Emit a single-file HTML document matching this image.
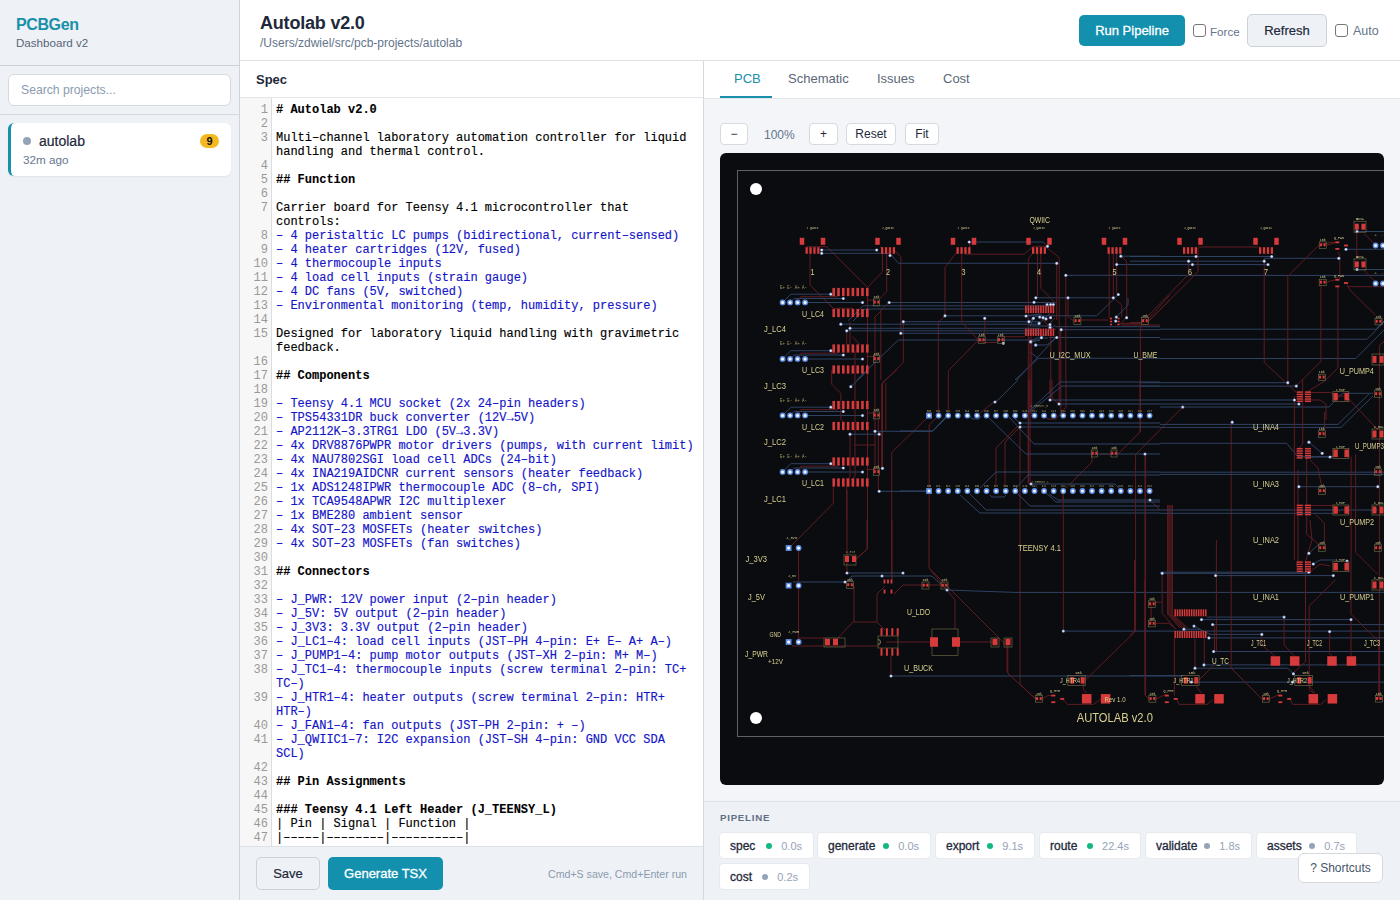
<!DOCTYPE html>
<html><head><meta charset="utf-8">
<style>
*{box-sizing:border-box;margin:0;padding:0}
html,body{width:1400px;height:900px;overflow:hidden;font-family:"Liberation Sans",sans-serif;background:#fff;color:#1e293b}
.sb{position:absolute;left:0;top:0;width:240px;height:900px;background:#eef1f5;border-right:1px solid #cfd4da}
.sbh{position:absolute;left:0;top:0;width:239px;height:66px;border-bottom:1px solid #cdd1d7}
.logo{position:absolute;left:16px;top:16px;font-size:16px;font-weight:bold;color:#1890aa;letter-spacing:-0.4px}
.sub{position:absolute;left:16px;top:36px;font-size:11.6px;color:#56657a}
.search{position:absolute;left:8px;top:74px;width:223px;height:32px;background:#fff;border:1px solid #d6dadf;border-radius:6px}
.search span{position:absolute;left:12px;top:8px;font-size:12.2px;color:#8b9bb0}
.sep{position:absolute;left:0;top:114px;width:239px;height:1px;background:#d5d9de}
.card{position:absolute;left:8px;top:123px;width:223px;height:53px;background:#fff;border-radius:6px;border-left:3px solid #1890aa;box-shadow:0 1px 2px rgba(0,0,0,.06)}
.dot{position:absolute;left:12px;top:14px;width:8px;height:8px;border-radius:50%;background:#94a3b8}
.pname{position:absolute;left:28px;top:10px;font-size:14px;color:#1e293b;-webkit-text-stroke:0.2px #1e293b}
.ago{position:absolute;left:12px;top:30px;font-size:11.7px;color:#66768c}
.badge{position:absolute;left:189px;top:11px;width:19px;height:14px;border-radius:7px;background:#f4b921;font-size:11px;font-weight:bold;text-align:center;line-height:14px;color:#111}

.hdr{position:absolute;left:240px;top:0;width:1160px;height:61px;background:#fff;border-bottom:1px solid #dde1e6}
.title{position:absolute;left:20px;top:13px;font-size:18px;font-weight:bold;color:#1e293b;letter-spacing:-0.2px}
.path{position:absolute;left:20px;top:36px;font-size:12px;color:#64748b}
.btn-run{position:absolute;left:839px;top:15px;width:106px;height:31px;background:#1390ae;border-radius:5px;color:#fff;font-size:13px;text-align:center;line-height:31px;-webkit-text-stroke:0.3px #fff}
.cb{position:absolute;width:13px;height:13px;border:1px solid #767676;border-radius:3px;background:#fff}
.lbl{position:absolute;font-size:12px;color:#64748b}
.btn-ref{position:absolute;left:1007px;top:14px;width:80px;height:33px;background:#eef1f5;border:1px solid #cdd2d8;border-radius:5px;color:#1e293b;font-size:13px;-webkit-text-stroke:0.2px #1e293b;text-align:center;line-height:31px}

.spec{position:absolute;left:240px;top:61px;width:464px;height:839px;background:#fff;border-right:1px solid #d5d8dc}
.spech{position:absolute;left:0;top:0;width:463px;height:37px;border-bottom:1px solid #e2e5e9}
.spech span{position:absolute;left:16px;top:11px;font-size:13px;font-weight:bold;color:#1e293b}
.ed{position:absolute;left:0;top:37px;width:463px;height:748px;overflow:hidden;background:#fff}
.gut{position:absolute;left:0;top:0;width:32px;height:748px;background:#f7f7f7;border-right:1px solid #ddd}
.lines{position:absolute;left:0;top:5px;width:463px;font-family:"Liberation Mono",monospace;font-size:12px;line-height:14px}
.ln{display:flex}
.ln .n{width:28px;text-align:right;color:#999;flex:none}
.ln .t{width:424px;margin-left:8px;white-space:pre-wrap;word-break:normal;color:#000;-webkit-text-stroke:0.15px currentColor}
.ln .t.b{font-weight:bold;-webkit-text-stroke:0.1px currentColor}
.ln .t.l{color:#1414c8}
.specf{position:absolute;left:0;top:785px;width:463px;height:54px;background:#eef1f5;border-top:1px solid #dde1e6}
.btn-save{position:absolute;left:16px;top:10px;width:64px;height:33px;background:#eef1f5;border:1px solid #cdd2d8;border-radius:5px;font-size:13px;-webkit-text-stroke:0.2px #1e293b;color:#1e293b;text-align:center;line-height:31px}
.btn-gen{position:absolute;left:88px;top:10px;width:115px;height:33px;background:#1390ae;border-radius:5px;font-size:13px;-webkit-text-stroke:0.3px #fff;color:#fff;text-align:center;line-height:33px}
.hint{position:absolute;right:16px;top:21px;font-size:10.6px;color:#8b9bb0}

.rp{position:absolute;left:704px;top:61px;width:696px;height:839px;background:#f3f5f8}
.tabs{position:absolute;left:0;top:0;width:696px;height:38px;background:#fff;border-bottom:1px solid #e2e5e9}
.tab{position:absolute;top:10px;font-size:13px;color:#5b6778}
.tab.a{color:#1890aa}
.uline{position:absolute;left:16px;top:35px;width:52px;height:2px;background:#1890aa}
.zb{position:absolute;top:62px;height:22px;background:#fff;border:1px solid #d6dadf;border-radius:4px;font-size:12px;color:#1e293b;text-align:center;line-height:20px}
.pcb{position:absolute;left:16px;top:92px;width:664px;height:632px;background:#0b0c10;border-radius:6px;overflow:hidden}
.pipe{position:absolute;left:0;top:740px;width:696px;height:99px;background:#eef1f5;border-top:1px solid #dde1e6}
.plbl{position:absolute;left:16px;top:9.5px;font-size:9.7px;font-weight:bold;color:#5f6f86;letter-spacing:0.75px}
.chip{position:absolute;height:27px;background:#fff;border-radius:4px;font-size:13px;color:#1e293b;white-space:nowrap;display:flex;align-items:center;padding:0 11px 0 10px;border:1px solid #e6e9ee}
.chip b{font-weight:normal;flex:1;font-size:12px;-webkit-text-stroke:0.3px #1e293b}
.chip i{display:block;width:6px;height:6px;border-radius:50%;margin-right:9px}
.chip s{text-decoration:none;color:#94a3b8;font-size:11px}
.sc{position:absolute;left:594px;top:792px;width:85px;height:30px;background:#fff;border:1px solid #d6dadf;border-radius:6px;font-size:12px;color:#475569;text-align:center;line-height:29px}
</style></head><body>
<div class="sb">
  <div class="sbh"><div class="logo">PCBGen</div><div class="sub">Dashboard v2</div></div>
  <div class="search"><span>Search projects...</span></div>
  <div class="sep"></div>
  <div class="card"><div class="dot"></div><div class="pname">autolab</div><div class="ago">32m ago</div><div class="badge">9</div></div>
</div>
<div class="hdr">
  <div class="title">Autolab v2.0</div>
  <div class="path">/Users/zdwiel/src/pcb-projects/autolab</div>
  <div class="btn-run">Run Pipeline</div>
  <div class="cb" style="left:953px;top:24px"></div><div class="lbl" style="left:970px;top:25px;font-size:11.6px">Force</div>
  <div class="btn-ref">Refresh</div>
  <div class="cb" style="left:1095px;top:24px"></div><div class="lbl" style="left:1113px;top:24px;font-size:12.5px">Auto</div>
</div>
<div class="spec">
  <div class="spech"><span>Spec</span></div>
  <div class="ed"><div class="gut"></div><div class="lines">
<div class="ln"><span class="n">1</span><span class="t b"># Autolab v2.0</span></div>
<div class="ln"><span class="n">2</span><span class="t"></span></div>
<div class="ln"><span class="n">3</span><span class="t">Multi–channel laboratory automation controller for liquid handling and thermal control.</span></div>
<div class="ln"><span class="n">4</span><span class="t"></span></div>
<div class="ln"><span class="n">5</span><span class="t b">## Function</span></div>
<div class="ln"><span class="n">6</span><span class="t"></span></div>
<div class="ln"><span class="n">7</span><span class="t">Carrier board for Teensy 4.1 microcontroller that controls:</span></div>
<div class="ln"><span class="n">8</span><span class="t l">– 4 peristaltic LC pumps (bidirectional, current–sensed)</span></div>
<div class="ln"><span class="n">9</span><span class="t l">– 4 heater cartridges (12V, fused)</span></div>
<div class="ln"><span class="n">10</span><span class="t l">– 4 thermocouple inputs</span></div>
<div class="ln"><span class="n">11</span><span class="t l">– 4 load cell inputs (strain gauge)</span></div>
<div class="ln"><span class="n">12</span><span class="t l">– 4 DC fans (5V, switched)</span></div>
<div class="ln"><span class="n">13</span><span class="t l">– Environmental monitoring (temp, humidity, pressure)</span></div>
<div class="ln"><span class="n">14</span><span class="t"></span></div>
<div class="ln"><span class="n">15</span><span class="t">Designed for laboratory liquid handling with gravimetric feedback.</span></div>
<div class="ln"><span class="n">16</span><span class="t"></span></div>
<div class="ln"><span class="n">17</span><span class="t b">## Components</span></div>
<div class="ln"><span class="n">18</span><span class="t"></span></div>
<div class="ln"><span class="n">19</span><span class="t l">– Teensy 4.1 MCU socket (2x 24–pin headers)</span></div>
<div class="ln"><span class="n">20</span><span class="t l">– TPS54331DR buck converter (12V→5V)</span></div>
<div class="ln"><span class="n">21</span><span class="t l">– AP2112K–3.3TRG1 LDO (5V→3.3V)</span></div>
<div class="ln"><span class="n">22</span><span class="t l">– 4x DRV8876PWPR motor drivers (pumps, with current limit)</span></div>
<div class="ln"><span class="n">23</span><span class="t l">– 4x NAU7802SGI load cell ADCs (24–bit)</span></div>
<div class="ln"><span class="n">24</span><span class="t l">– 4x INA219AIDCNR current sensors (heater feedback)</span></div>
<div class="ln"><span class="n">25</span><span class="t l">– 1x ADS1248IPWR thermocouple ADC (8–ch, SPI)</span></div>
<div class="ln"><span class="n">26</span><span class="t l">– 1x TCA9548APWR I2C multiplexer</span></div>
<div class="ln"><span class="n">27</span><span class="t l">– 1x BME280 ambient sensor</span></div>
<div class="ln"><span class="n">28</span><span class="t l">– 4x SOT–23 MOSFETs (heater switches)</span></div>
<div class="ln"><span class="n">29</span><span class="t l">– 4x SOT–23 MOSFETs (fan switches)</span></div>
<div class="ln"><span class="n">30</span><span class="t"></span></div>
<div class="ln"><span class="n">31</span><span class="t b">## Connectors</span></div>
<div class="ln"><span class="n">32</span><span class="t"></span></div>
<div class="ln"><span class="n">33</span><span class="t l">– J_PWR: 12V power input (2–pin header)</span></div>
<div class="ln"><span class="n">34</span><span class="t l">– J_5V: 5V output (2–pin header)</span></div>
<div class="ln"><span class="n">35</span><span class="t l">– J_3V3: 3.3V output (2–pin header)</span></div>
<div class="ln"><span class="n">36</span><span class="t l">– J_LC1–4: load cell inputs (JST–PH 4–pin: E+ E– A+ A–)</span></div>
<div class="ln"><span class="n">37</span><span class="t l">– J_PUMP1–4: pump motor outputs (JST–XH 2–pin: M+ M–)</span></div>
<div class="ln"><span class="n">38</span><span class="t l">– J_TC1–4: thermocouple inputs (screw terminal 2–pin: TC+ TC–)</span></div>
<div class="ln"><span class="n">39</span><span class="t l">– J_HTR1–4: heater outputs (screw terminal 2–pin: HTR+ HTR–)</span></div>
<div class="ln"><span class="n">40</span><span class="t l">– J_FAN1–4: fan outputs (JST–PH 2–pin: + –)</span></div>
<div class="ln"><span class="n">41</span><span class="t l">– J_QWIIC1–7: I2C expansion (JST–SH 4–pin: GND VCC SDA SCL)</span></div>
<div class="ln"><span class="n">42</span><span class="t"></span></div>
<div class="ln"><span class="n">43</span><span class="t b">## Pin Assignments</span></div>
<div class="ln"><span class="n">44</span><span class="t"></span></div>
<div class="ln"><span class="n">45</span><span class="t b">### Teensy 4.1 Left Header (J_TEENSY_L)</span></div>
<div class="ln"><span class="n">46</span><span class="t">| Pin | Signal | Function |</span></div>
<div class="ln"><span class="n">47</span><span class="t">|–––––|––––––––|––––––––––|</span></div>
<div class="ln"><span class="n">48</span><span class="t">| 1 | GND | Ground |</span></div>
<div class="ln"><span class="n">49</span><span class="t">| 2 | D0 | UART RX |</span></div>
  </div></div>
  <div class="specf"><div class="btn-save">Save</div><div class="btn-gen">Generate TSX</div><div class="hint">Cmd+S save, Cmd+Enter run</div></div>
</div>
<div class="rp">
  <div class="tabs">
    <div class="tab a" style="left:30px">PCB</div>
    <div class="tab" style="left:84px">Schematic</div>
    <div class="tab" style="left:173px">Issues</div>
    <div class="tab" style="left:239px">Cost</div>
    <div class="uline"></div>
  </div>
  <div class="zb" style="left:16px;width:28px">&minus;</div>
  <div style="position:absolute;left:60px;top:67px;font-size:12px;color:#64748b">100%</div>
  <div class="zb" style="left:105px;width:29px">+</div>
  <div class="zb" style="left:142px;width:50px">Reset</div>
  <div class="zb" style="left:201px;width:34px">Fit</div>
  <div class="pcb"><svg width="664" height="632" viewBox="720 153 664 632" style="display:block;will-change:transform;font-family:'Liberation Mono',monospace"><rect x="737.5" y="170.5" width="700" height="566" fill="none" stroke="#606168" stroke-width="1"/>
<polyline points="806.7,246.7 826.7,246.7 867.5,287.5" fill="none" stroke="#5e1c21" stroke-width="1.0"/>
<polyline points="880.0,246.7 882.5,249.0 882.5,271.7 867.5,287.5" fill="none" stroke="#5e1c21" stroke-width="1.0"/>
<polyline points="810.0,248.3 810.0,285.0 833.3,308.3 853.3,308.3" fill="none" stroke="#5e1c21" stroke-width="1.0"/>
<polyline points="867.5,287.5 867.5,549.0 855.0,560.0" fill="none" stroke="#5e1c21" stroke-width="1.0"/>
<polyline points="886.7,253.3 886.7,291.7 880.0,298.3" fill="none" stroke="#5e1c21" stroke-width="1.0"/>
<polyline points="895.0,250.8 900.8,256.7 900.8,333.3" fill="none" stroke="#5e1c21" stroke-width="1.0"/>
<polyline points="903.3,321.7 903.3,362.5 881.7,384.0 881.7,470.0" fill="none" stroke="#5e1c21" stroke-width="1.0"/>
<polyline points="889.0,302.5 880.3,310.5" fill="none" stroke="#5e1c21" stroke-width="1.0"/>
<polyline points="880.0,312.0 875.0,317.0 875.0,375.0" fill="none" stroke="#5e1c21" stroke-width="1.0"/>
<polyline points="880.8,310.0 880.8,380.0" fill="none" stroke="#5e1c21" stroke-width="1.0"/>
<polyline points="958.3,250.0 945.0,267.5 945.0,315.8 938.3,322.5 938.3,414.0" fill="none" stroke="#5e1c21" stroke-width="1.0"/>
<polyline points="782.5,302.5 790.8,294.2 830.8,294.2" fill="none" stroke="#2e4262" stroke-width="1.0"/>
<polyline points="790.0,302.5 794.2,298.5 843.3,298.5" fill="none" stroke="#2e4262" stroke-width="1.0"/>
<polyline points="797.5,302.5 800.8,296.7 838.0,296.7" fill="none" stroke="#5e1c21" stroke-width="1.0"/>
<polyline points="805.0,302.5 862.5,302.5" fill="none" stroke="#2e4262" stroke-width="1.0"/>
<polyline points="866.7,300.0 875.0,300.0" fill="none" stroke="#5e1c21" stroke-width="1.0"/>
<polyline points="782.5,359.0 790.8,350.7 830.8,350.7" fill="none" stroke="#2e4262" stroke-width="1.0"/>
<polyline points="790.0,359.0 794.2,355.0 843.3,355.0" fill="none" stroke="#2e4262" stroke-width="1.0"/>
<polyline points="797.5,359.0 800.8,353.2 838.0,353.2" fill="none" stroke="#5e1c21" stroke-width="1.0"/>
<polyline points="805.0,359.0 862.5,359.0" fill="none" stroke="#2e4262" stroke-width="1.0"/>
<polyline points="866.7,356.5 875.0,356.5" fill="none" stroke="#5e1c21" stroke-width="1.0"/>
<polyline points="782.5,415.5 790.8,407.2 830.8,407.2" fill="none" stroke="#2e4262" stroke-width="1.0"/>
<polyline points="790.0,415.5 794.2,411.5 843.3,411.5" fill="none" stroke="#2e4262" stroke-width="1.0"/>
<polyline points="797.5,415.5 800.8,409.7 838.0,409.7" fill="none" stroke="#5e1c21" stroke-width="1.0"/>
<polyline points="805.0,415.5 862.5,415.5" fill="none" stroke="#2e4262" stroke-width="1.0"/>
<polyline points="866.7,413.0 875.0,413.0" fill="none" stroke="#5e1c21" stroke-width="1.0"/>
<polyline points="782.5,472.0 790.8,463.7 830.8,463.7" fill="none" stroke="#2e4262" stroke-width="1.0"/>
<polyline points="790.0,472.0 794.2,468.0 843.3,468.0" fill="none" stroke="#2e4262" stroke-width="1.0"/>
<polyline points="797.5,472.0 800.8,466.2 838.0,466.2" fill="none" stroke="#5e1c21" stroke-width="1.0"/>
<polyline points="805.0,472.0 862.5,472.0" fill="none" stroke="#2e4262" stroke-width="1.0"/>
<polyline points="866.7,469.5 875.0,469.5" fill="none" stroke="#5e1c21" stroke-width="1.0"/>
<polyline points="831.7,370.0 831.7,384.2 840.8,393.3 840.8,419.2 843.3,422.0" fill="none" stroke="#5e1c21" stroke-width="1.0"/>
<polyline points="850.0,322.0 850.0,345.0" fill="none" stroke="#5e1c21" stroke-width="1.0"/>
<polyline points="846.7,330.0 846.7,345.0" fill="none" stroke="#5e1c21" stroke-width="1.0"/>
<polyline points="852.5,336.7 860.0,345.0" fill="none" stroke="#5e1c21" stroke-width="1.0"/>
<polyline points="850.0,435.0 850.0,476.7 847.0,480.0" fill="none" stroke="#5e1c21" stroke-width="1.0"/>
<polyline points="855.0,350.0 855.0,476.7 851.0,480.0" fill="none" stroke="#5e1c21" stroke-width="1.0"/>
<polyline points="854.2,445.0 875.8,445.0" fill="none" stroke="#5e1c21" stroke-width="1.0"/>
<polyline points="875.0,375.0 875.0,470.0" fill="none" stroke="#5e1c21" stroke-width="1.0"/>
<polyline points="878.3,418.3 878.3,490.0" fill="none" stroke="#5e1c21" stroke-width="1.0"/>
<polyline points="882.5,383.3 882.5,468.3" fill="none" stroke="#5e1c21" stroke-width="1.0"/>
<polyline points="881.7,383.3 896.7,370.0" fill="none" stroke="#5e1c21" stroke-width="1.0"/>
<polyline points="885.8,383.0 885.8,430.0" fill="none" stroke="#5e1c21" stroke-width="1.0"/>
<polyline points="926.7,418.3 891.7,452.5 891.7,580.0" fill="none" stroke="#5e1c21" stroke-width="1.0"/>
<polyline points="936.7,417.5 929.2,425.0 929.2,520.0" fill="none" stroke="#5e1c21" stroke-width="1.0"/>
<polyline points="833.3,486.7 833.3,503.3 790.0,547.0" fill="none" stroke="#5e1c21" stroke-width="1.0"/>
<polyline points="846.7,478.0 846.7,520.0" fill="none" stroke="#5e1c21" stroke-width="1.0"/>
<polyline points="875.0,431.3 932.5,431.3 946.7,415.8" fill="none" stroke="#2e4262" stroke-width="1.0"/>
<polyline points="850.0,434.2 879.2,434.2" fill="none" stroke="#2e4262" stroke-width="1.0"/>
<polyline points="879.2,491.3 929.2,491.3" fill="none" stroke="#2e4262" stroke-width="1.0"/>
<polyline points="850.8,386.7 866.7,371.7" fill="none" stroke="#2e4262" stroke-width="1.0"/>
<polyline points="821.7,250.0 876.7,250.0" fill="none" stroke="#2e4262" stroke-width="1.0"/>
<polyline points="821.7,253.3 890.0,253.3 898.3,263.3 1056.7,263.3" fill="none" stroke="#2e4262" stroke-width="1.0"/>
<polyline points="889.2,302.5 1040.0,302.5" fill="none" stroke="#2e4262" stroke-width="1.0"/>
<polyline points="848.0,320.8 863.3,305.8 1040.0,305.8" fill="none" stroke="#2e4262" stroke-width="1.0"/>
<polyline points="853.0,321.0 865.0,309.0 1040.0,309.0" fill="none" stroke="#2e4262" stroke-width="1.0"/>
<polyline points="903.3,321.7 1040.0,321.7" fill="none" stroke="#2e4262" stroke-width="1.0"/>
<polyline points="840.8,324.2 1040.0,324.2" fill="none" stroke="#2e4262" stroke-width="1.0"/>
<polyline points="850.0,328.3 1040.0,328.3" fill="none" stroke="#2e4262" stroke-width="1.0"/>
<polyline points="846.7,330.8 1040.0,330.8" fill="none" stroke="#2e4262" stroke-width="1.0"/>
<polyline points="900.8,333.3 1040.0,333.3" fill="none" stroke="#2e4262" stroke-width="1.0"/>
<polyline points="945.0,315.8 1040.0,315.8" fill="none" stroke="#2e4262" stroke-width="1.0"/>
<polyline points="898.3,340.0 1040.0,340.0" fill="none" stroke="#2e4262" stroke-width="1.0"/>
<polyline points="898.3,340.0 856.7,380.0" fill="none" stroke="#2e4262" stroke-width="1.0"/>
<polyline points="969.2,242.0 1043.3,242.0 1047.5,246.3" fill="none" stroke="#2e4262" stroke-width="1.0"/>
<polyline points="1065.8,275.3 1160.0,275.3" fill="none" stroke="#2e4262" stroke-width="1.0"/>
<polyline points="1120.8,256.2 1160.0,256.2" fill="none" stroke="#2e4262" stroke-width="1.0"/>
<polyline points="1116.7,264.5 1160.0,264.5" fill="none" stroke="#2e4262" stroke-width="1.0"/>
<polyline points="1035.8,297.8 1113.3,297.8" fill="none" stroke="#2e4262" stroke-width="1.0"/>
<polyline points="1040.0,315.8 1096.7,315.8 1118.3,294.5" fill="none" stroke="#2e4262" stroke-width="1.0"/>
<polyline points="984.7,318.3 984.7,336.7" fill="none" stroke="#5e1c21" stroke-width="1.0"/>
<polyline points="1040.0,340.0 1030.8,342.0" fill="none" stroke="#2e4262" stroke-width="1.0"/>
<polyline points="1035.8,345.0 1046.7,345.0 1056.7,337.5" fill="none" stroke="#2e4262" stroke-width="1.0"/>
<polyline points="1049.0,337.5 1160.0,337.5" fill="none" stroke="#2e4262" stroke-width="1.0"/>
<polyline points="1061.2,329.7 1160.0,329.7" fill="none" stroke="#2e4262" stroke-width="1.0"/>
<polyline points="1055.0,326.7 1160.0,326.7" fill="none" stroke="#2e4262" stroke-width="1.0"/>
<polyline points="1030.0,352.0 1038.3,358.3 1160.0,358.3" fill="none" stroke="#2e4262" stroke-width="1.0"/>
<polyline points="1038.3,358.3 1015.0,380.0" fill="none" stroke="#2e4262" stroke-width="1.0"/>
<polyline points="1056.7,336.7 1016.7,380.0" fill="none" stroke="#2e4262" stroke-width="1.0"/>
<polyline points="1040.0,302.5 1055.0,302.5" fill="none" stroke="#2e4262" stroke-width="1.0"/>
<polyline points="1040.0,305.8 1048.0,305.8" fill="none" stroke="#2e4262" stroke-width="1.0"/>
<polyline points="961.7,250.0 961.7,322.5 978.3,340.0 948.3,370.8 948.3,414.0" fill="none" stroke="#5e1c21" stroke-width="1.0"/>
<polyline points="965.0,254.2 1024.2,254.2 1033.3,246.3" fill="none" stroke="#5e1c21" stroke-width="1.0"/>
<polyline points="969.7,242.0 969.7,250.0" fill="none" stroke="#5e1c21" stroke-width="1.0"/>
<polyline points="1033.3,246.3 1045.0,246.3 1059.2,257.5 1059.2,404.0" fill="none" stroke="#5e1c21" stroke-width="1.0"/>
<polyline points="1032.5,253.3 1028.3,259.2 1028.3,484.0" fill="none" stroke="#5e1c21" stroke-width="1.0"/>
<polyline points="1037.5,253.3 1037.5,296.7" fill="none" stroke="#5e1c21" stroke-width="1.0"/>
<polyline points="1040.8,253.3 1040.8,288.3 1055.8,303.3" fill="none" stroke="#5e1c21" stroke-width="1.0"/>
<polyline points="1056.7,263.3 1056.7,320.0" fill="none" stroke="#5e1c21" stroke-width="1.0"/>
<polyline points="1065.8,275.3 1065.8,380.0" fill="none" stroke="#5e1c21" stroke-width="1.0"/>
<polyline points="1068.0,297.8 1068.0,316.7 1073.3,320.8" fill="none" stroke="#5e1c21" stroke-width="1.0"/>
<polyline points="978.3,340.0 983.0,342.5 996.0,342.5 1000.0,340.0" fill="none" stroke="#5e1c21" stroke-width="1.0"/>
<polyline points="1000.8,336.7 1025.0,336.7" fill="none" stroke="#5e1c21" stroke-width="1.0"/>
<polyline points="1109.2,253.3 1109.2,316.7 1110.8,320.0" fill="none" stroke="#5e1c21" stroke-width="1.0"/>
<polyline points="1113.3,253.3 1113.3,296.7" fill="none" stroke="#5e1c21" stroke-width="1.0"/>
<polyline points="1116.7,253.3 1116.7,293.3" fill="none" stroke="#5e1c21" stroke-width="1.0"/>
<polyline points="1121.7,256.7 1126.7,261.7 1126.7,316.7 1121.7,322.5" fill="none" stroke="#5e1c21" stroke-width="1.0"/>
<polyline points="1113.3,297.5 1121.7,305.0 1121.7,316.7" fill="none" stroke="#5e1c21" stroke-width="1.0"/>
<polyline points="1080.0,320.0 1108.3,320.0" fill="none" stroke="#5e1c21" stroke-width="1.0"/>
<polyline points="1120.8,325.0 1160.0,325.0" fill="none" stroke="#5e1c21" stroke-width="1.0"/>
<polyline points="1050.8,321.7 1050.8,400.0" fill="none" stroke="#5e1c21" stroke-width="1.0"/>
<polyline points="1060.8,330.0 1060.8,414.0" fill="none" stroke="#5e1c21" stroke-width="1.0"/>
<polyline points="1030.0,336.7 1030.0,414.0" fill="none" stroke="#5e1c21" stroke-width="1.0"/>
<polyline points="1031.7,336.7 1031.7,414.0" fill="none" stroke="#5e1c21" stroke-width="1.0"/>
<polyline points="1130.0,256.5 1271.7,256.5" fill="none" stroke="#2e4262" stroke-width="1.0"/>
<polyline points="1264.2,258.3 1338.8,258.3" fill="none" stroke="#2e4262" stroke-width="1.0"/>
<polyline points="1130.0,261.2 1264.2,261.2" fill="none" stroke="#2e4262" stroke-width="1.0"/>
<polyline points="1130.0,264.6 1268.0,264.6" fill="none" stroke="#2e4262" stroke-width="1.0"/>
<polyline points="1346.0,249.3 1384.0,249.3" fill="none" stroke="#2e4262" stroke-width="1.0"/>
<polyline points="1160.0,275.4 1384.0,275.4" fill="none" stroke="#2e4262" stroke-width="1.0"/>
<polyline points="1160.0,329.2 1375.6,329.2 1384.0,321.0" fill="none" stroke="#2e4262" stroke-width="1.0"/>
<polyline points="1160.0,339.2 1367.2,339.2 1384.0,322.0" fill="none" stroke="#2e4262" stroke-width="1.0"/>
<polyline points="1160.0,358.5 1355.8,358.5 1384.0,330.0" fill="none" stroke="#2e4262" stroke-width="1.0"/>
<polyline points="1160.0,337.5 1160.0,337.5" fill="none" stroke="#2e4262" stroke-width="1.0"/>
<polyline points="1140.0,382.7 1287.8,382.7" fill="none" stroke="#2e4262" stroke-width="1.0"/>
<polyline points="1140.0,386.1 1296.3,386.1" fill="none" stroke="#2e4262" stroke-width="1.0"/>
<polyline points="1198.0,247.0 1258.5,247.0" fill="none" stroke="#5e1c21" stroke-width="1.0"/>
<polyline points="1188.6,261.2 1188.6,274.4 1141.3,322.6 1130.0,322.6" fill="none" stroke="#5e1c21" stroke-width="1.0"/>
<polyline points="1198.0,248.0 1198.0,271.6 1147.0,322.6" fill="none" stroke="#5e1c21" stroke-width="1.0"/>
<polyline points="1140.4,325.4 1140.4,432.0" fill="none" stroke="#5e1c21" stroke-width="1.0"/>
<polyline points="1264.2,258.3 1264.2,362.3 1296.3,392.5" fill="none" stroke="#5e1c21" stroke-width="1.0"/>
<polyline points="1287.8,276.3 1319.0,245.1 1330.3,242.3 1337.0,242.3" fill="none" stroke="#5e1c21" stroke-width="1.0"/>
<polyline points="1287.8,276.3 1287.8,382.7" fill="none" stroke="#5e1c21" stroke-width="1.0"/>
<polyline points="1320.9,284.8 1320.9,361.3 1296.3,386.0" fill="none" stroke="#5e1c21" stroke-width="1.0"/>
<polyline points="1326.5,282.0 1335.0,280.0" fill="none" stroke="#5e1c21" stroke-width="1.0"/>
<polyline points="1326.5,245.0 1335.0,243.0" fill="none" stroke="#5e1c21" stroke-width="1.0"/>
<polyline points="1337.9,251.7 1339.8,254.6 1339.8,279.1" fill="none" stroke="#5e1c21" stroke-width="1.0"/>
<polyline points="1337.9,286.7 1337.9,368.0 1324.6,381.2 1300.0,396.3" fill="none" stroke="#5e1c21" stroke-width="1.0"/>
<polyline points="1346.4,284.8 1352.0,292.4 1375.6,315.0" fill="none" stroke="#5e1c21" stroke-width="1.0"/>
<polyline points="1347.3,286.7 1384.0,286.7" fill="none" stroke="#5e1c21" stroke-width="1.0"/>
<polyline points="1356.8,226.0 1356.8,258.3" fill="none" stroke="#5e1c21" stroke-width="1.0"/>
<polyline points="1363.4,269.7 1375.6,282.0" fill="none" stroke="#5e1c21" stroke-width="1.0"/>
<polyline points="1364.3,233.8 1375.6,245.1" fill="none" stroke="#5e1c21" stroke-width="1.0"/>
<polyline points="1384.0,341.5 1379.4,345.3 1379.4,700.0" fill="none" stroke="#5e1c21" stroke-width="1.0"/>
<polyline points="1305.7,392.5 1330.3,392.5 1335.0,396.3" fill="none" stroke="#5e1c21" stroke-width="1.0"/>
<polyline points="938.0,412.0 938.0,416.0" fill="none" stroke="#5e1c21" stroke-width="1.0"/>
<polyline points="948.0,412.0 948.0,416.0" fill="none" stroke="#5e1c21" stroke-width="1.0"/>
<polyline points="980.0,413.0 994.0,402.0" fill="none" stroke="#5e1c21" stroke-width="1.0"/>
<polyline points="1030.0,380.0 1030.0,484.0" fill="none" stroke="#5e1c21" stroke-width="1.0"/>
<polyline points="1028.3,380.0 1028.3,483.0" fill="none" stroke="#5e1c21" stroke-width="1.0"/>
<polyline points="1050.0,380.0 1050.0,400.0" fill="none" stroke="#5e1c21" stroke-width="1.0"/>
<polyline points="1052.0,380.0 1052.0,398.0 1059.0,404.0" fill="none" stroke="#5e1c21" stroke-width="1.0"/>
<polyline points="1066.0,380.0 1066.0,407.0 1056.0,419.0 1048.0,419.0 1044.0,415.0" fill="none" stroke="#5e1c21" stroke-width="1.0"/>
<polyline points="996.0,448.0 1018.0,426.0" fill="none" stroke="#5e1c21" stroke-width="1.0"/>
<polyline points="996.0,448.0 996.0,486.0" fill="none" stroke="#5e1c21" stroke-width="1.0"/>
<polyline points="1005.0,442.0 1020.0,427.0" fill="none" stroke="#5e1c21" stroke-width="1.0"/>
<polyline points="1005.0,442.0 1005.0,487.0" fill="none" stroke="#5e1c21" stroke-width="1.0"/>
<polyline points="1020.0,428.0 1020.0,684.4 1035.6,698.9" fill="none" stroke="#5e1c21" stroke-width="1.0"/>
<polyline points="1063.0,489.0 1063.0,500.0" fill="none" stroke="#5e1c21" stroke-width="1.0"/>
<polyline points="1066.0,488.0 1092.0,462.0 1092.0,454.0" fill="none" stroke="#5e1c21" stroke-width="1.0"/>
<polyline points="1100.0,454.0 1112.0,454.0" fill="none" stroke="#5e1c21" stroke-width="1.0"/>
<polyline points="1118.0,454.0 1140.0,432.0 1140.0,380.0" fill="none" stroke="#5e1c21" stroke-width="1.0"/>
<polyline points="1136.0,454.0 1182.7,407.1" fill="none" stroke="#5e1c21" stroke-width="1.0"/>
<polyline points="1145.0,454.0 1145.0,640.0" fill="none" stroke="#5e1c21" stroke-width="1.0"/>
<polyline points="1150.0,500.0 1160.0,510.0" fill="none" stroke="#5e1c21" stroke-width="1.0"/>
<polyline points="900.0,431.0 933.0,431.0 948.0,416.0" fill="none" stroke="#2e4262" stroke-width="1.0"/>
<polyline points="988.0,417.0 1026.0,454.0 1160.0,454.0" fill="none" stroke="#2e4262" stroke-width="1.0"/>
<polyline points="1009.0,417.0 1034.0,444.0 1160.0,444.0" fill="none" stroke="#2e4262" stroke-width="1.0"/>
<polyline points="1012.0,416.0 1020.0,423.0 1160.0,423.0" fill="none" stroke="#2e4262" stroke-width="1.0"/>
<polyline points="1020.0,427.0 1160.0,427.0" fill="none" stroke="#2e4262" stroke-width="1.0"/>
<polyline points="1018.0,380.0 998.0,400.0 995.0,402.0" fill="none" stroke="#2e4262" stroke-width="1.0"/>
<polyline points="1028.0,412.0 1060.0,382.0 1160.0,382.0" fill="none" stroke="#2e4262" stroke-width="1.0"/>
<polyline points="1030.0,412.0 1062.0,386.0 1160.0,386.0" fill="none" stroke="#2e4262" stroke-width="1.0"/>
<polyline points="1050.0,400.0 1160.0,400.0" fill="none" stroke="#2e4262" stroke-width="1.0"/>
<polyline points="1059.0,404.0 1160.0,404.0" fill="none" stroke="#2e4262" stroke-width="1.0"/>
<polyline points="900.0,491.0 928.0,491.0" fill="none" stroke="#2e4262" stroke-width="1.0"/>
<polyline points="980.0,488.0 996.0,472.0 1160.0,472.0" fill="none" stroke="#2e4262" stroke-width="1.0"/>
<polyline points="1016.0,488.0 1028.0,475.0 1160.0,475.0" fill="none" stroke="#2e4262" stroke-width="1.0"/>
<polyline points="1031.0,484.0 1115.0,484.0 1120.0,489.0" fill="none" stroke="#2e4262" stroke-width="1.0"/>
<polyline points="960.0,495.0 980.0,513.0 1160.0,513.0" fill="none" stroke="#2e4262" stroke-width="1.0"/>
<polyline points="970.0,494.0 986.0,510.0 1160.0,510.0" fill="none" stroke="#2e4262" stroke-width="1.0"/>
<polyline points="1018.0,494.0 1030.0,506.0 1160.0,506.0" fill="none" stroke="#2e4262" stroke-width="1.0"/>
<polyline points="1046.0,493.0 1056.0,502.0 1160.0,502.0" fill="none" stroke="#2e4262" stroke-width="1.0"/>
<polyline points="1049.0,494.0 1058.0,500.0 1160.0,500.0" fill="none" stroke="#2e4262" stroke-width="1.0"/>
<polyline points="990.0,495.0 992.0,497.0 1004.0,497.0 1006.0,495.0" fill="none" stroke="#2e4262" stroke-width="1.0"/>
<polyline points="970.0,416.0 972.0,419.0 979.0,419.0 981.0,416.0" fill="none" stroke="#2e4262" stroke-width="1.0"/>
<polyline points="798.6,548.0 798.6,642.0" fill="none" stroke="#5e1c21" stroke-width="1.0"/>
<polyline points="798.6,638.0 824.0,638.0" fill="none" stroke="#5e1c21" stroke-width="1.0"/>
<polyline points="792.0,646.0 879.0,646.0" fill="none" stroke="#5e1c21" stroke-width="1.0"/>
<polyline points="836.0,640.0 853.0,622.0 877.0,622.0 885.0,630.0" fill="none" stroke="#5e1c21" stroke-width="1.0"/>
<polyline points="847.0,490.0 847.0,573.0" fill="none" stroke="#5e1c21" stroke-width="1.0"/>
<polyline points="867.0,520.0 867.0,549.0 855.0,560.0" fill="none" stroke="#5e1c21" stroke-width="1.0"/>
<polyline points="892.0,520.0 892.0,580.0" fill="none" stroke="#5e1c21" stroke-width="1.0"/>
<polyline points="929.0,520.0 929.0,568.0 955.0,600.0 955.0,629.0" fill="none" stroke="#5e1c21" stroke-width="1.0"/>
<polyline points="929.0,568.0 1005.0,644.0" fill="none" stroke="#5e1c21" stroke-width="1.0"/>
<polyline points="1007.0,644.0 1007.0,672.0 1015.0,680.0" fill="none" stroke="#5e1c21" stroke-width="1.0"/>
<polyline points="854.0,586.0 854.0,622.0" fill="none" stroke="#5e1c21" stroke-width="1.0"/>
<polyline points="877.0,594.0 877.0,622.0" fill="none" stroke="#5e1c21" stroke-width="1.0"/>
<polyline points="877.0,594.0 885.0,586.0" fill="none" stroke="#5e1c21" stroke-width="1.0"/>
<polyline points="894.0,594.0 903.0,585.0 945.0,585.0" fill="none" stroke="#5e1c21" stroke-width="1.0"/>
<polyline points="886.0,642.0 931.0,642.0" fill="none" stroke="#5e1c21" stroke-width="1.0"/>
<polyline points="959.0,642.0 993.0,642.0" fill="none" stroke="#5e1c21" stroke-width="1.0"/>
<polyline points="891.0,656.0 891.0,676.0" fill="none" stroke="#5e1c21" stroke-width="1.0"/>
<polyline points="847.0,573.0 903.0,573.0" fill="none" stroke="#2e4262" stroke-width="1.0"/>
<polyline points="846.0,582.0 852.0,576.0 932.0,576.0 947.0,590.0 1015.0,592.4 1384.0,592.4" fill="none" stroke="#2e4262" stroke-width="1.0"/>
<polyline points="793.0,582.0 845.0,582.0" fill="none" stroke="#2e4262" stroke-width="1.0"/>
<polyline points="891.0,676.0 1182.0,676.0" fill="none" stroke="#2e4262" stroke-width="1.0"/>
<polyline points="1007.8,646.7 1007.8,673.3 1035.6,698.9" fill="none" stroke="#5e1c21" stroke-width="1.0"/>
<polyline points="1063.3,489.0 1063.3,631.1" fill="none" stroke="#5e1c21" stroke-width="1.0"/>
<polyline points="1135.6,454.0 1135.6,631.1 1083.3,682.2" fill="none" stroke="#5e1c21" stroke-width="1.0"/>
<polyline points="1145.6,454.0 1145.6,695.6 1148.9,698.9" fill="none" stroke="#5e1c21" stroke-width="1.0"/>
<polyline points="1167.6,505.0 1167.6,614.0" fill="none" stroke="#5e1c21" stroke-width="1.0"/>
<polyline points="1168.8,505.0 1168.8,614.0" fill="none" stroke="#5e1c21" stroke-width="1.0"/>
<polyline points="1170.0,505.0 1170.0,614.0" fill="none" stroke="#5e1c21" stroke-width="1.0"/>
<polyline points="1171.2,505.0 1171.2,614.0" fill="none" stroke="#5e1c21" stroke-width="1.0"/>
<polyline points="1172.4,505.0 1172.4,614.0" fill="none" stroke="#5e1c21" stroke-width="1.0"/>
<polyline points="1162.2,573.3 1162.2,613.3 1175.6,628.9" fill="none" stroke="#5e1c21" stroke-width="1.0"/>
<polyline points="1155.6,602.2 1162.2,602.2" fill="none" stroke="#5e1c21" stroke-width="1.0"/>
<polyline points="1155.6,623.3 1168.9,623.3 1175.6,628.9" fill="none" stroke="#5e1c21" stroke-width="1.0"/>
<polyline points="1151.1,604.4 1151.1,623.3" fill="none" stroke="#5e1c21" stroke-width="1.0"/>
<polyline points="1174.4,637.8 1174.4,695.6" fill="none" stroke="#5e1c21" stroke-width="1.0"/>
<polyline points="1042.2,698.9 1047.8,695.6 1053.3,695.6" fill="none" stroke="#5e1c21" stroke-width="1.0"/>
<polyline points="1062.2,698.9 1067.8,704.4 1093.3,704.4 1101.1,698.9" fill="none" stroke="#5e1c21" stroke-width="1.0"/>
<polyline points="1083.3,683.3 1083.3,688.9 1086.7,693.3" fill="none" stroke="#5e1c21" stroke-width="1.0"/>
<polyline points="1063.3,631.1 1384.0,631.1" fill="none" stroke="#2e4262" stroke-width="1.0"/>
<polyline points="1162.2,573.3 1308.0,573.3" fill="none" stroke="#2e4262" stroke-width="1.0"/>
<polyline points="1207.0,617.1 1284.1,617.1" fill="none" stroke="#2e4262" stroke-width="1.0"/>
<polyline points="1201.5,619.6 1351.0,619.6" fill="none" stroke="#2e4262" stroke-width="1.0"/>
<polyline points="1212.6,624.6 1384.0,624.6" fill="none" stroke="#2e4262" stroke-width="1.0"/>
<polyline points="1194.0,626.1 1210.0,634.4 1261.8,634.4" fill="none" stroke="#2e4262" stroke-width="1.0"/>
<polyline points="1183.9,629.2 1200.0,629.2" fill="none" stroke="#2e4262" stroke-width="1.0"/>
<polyline points="1208.9,637.9 1384.0,637.9" fill="none" stroke="#2e4262" stroke-width="1.0"/>
<polyline points="1213.6,651.5 1384.0,651.5" fill="none" stroke="#2e4262" stroke-width="1.0"/>
<polyline points="1203.9,664.9 1384.0,664.9" fill="none" stroke="#2e4262" stroke-width="1.0"/>
<polyline points="1195.0,668.2 1287.8,668.2 1293.4,673.8" fill="none" stroke="#2e4262" stroke-width="1.0"/>
<polyline points="1130.0,675.6 1183.9,675.6" fill="none" stroke="#2e4262" stroke-width="1.0"/>
<polyline points="1191.3,682.1 1384.0,682.1" fill="none" stroke="#2e4262" stroke-width="1.0"/>
<polyline points="1134.6,560.0 1134.6,630.1 1130.0,635.7" fill="none" stroke="#5e1c21" stroke-width="1.0"/>
<polyline points="1144.9,580.0 1144.9,695.1 1148.6,698.8" fill="none" stroke="#5e1c21" stroke-width="1.0"/>
<polyline points="1195.0,638.5 1195.0,668.2" fill="none" stroke="#5e1c21" stroke-width="1.0"/>
<polyline points="1204.3,633.9 1204.3,664.9" fill="none" stroke="#5e1c21" stroke-width="1.0"/>
<polyline points="1214.5,624.6 1214.5,651.5" fill="none" stroke="#5e1c21" stroke-width="1.0"/>
<polyline points="1216.4,540.0 1216.4,651.5" fill="none" stroke="#5e1c21" stroke-width="1.0"/>
<polyline points="1231.2,422.2 1231.2,668.2 1261.8,698.8" fill="none" stroke="#5e1c21" stroke-width="1.0"/>
<polyline points="1214.5,664.5 1198.7,680.3" fill="none" stroke="#5e1c21" stroke-width="1.0"/>
<polyline points="1261.8,635.7 1261.8,645.0 1274.8,656.1" fill="none" stroke="#5e1c21" stroke-width="1.0"/>
<polyline points="1284.1,617.1 1284.1,645.0 1294.3,656.1" fill="none" stroke="#5e1c21" stroke-width="1.0"/>
<polyline points="1329.6,631.6 1329.6,653.4 1332.4,656.1" fill="none" stroke="#5e1c21" stroke-width="1.0"/>
<polyline points="1351.0,619.6 1351.0,656.1" fill="none" stroke="#5e1c21" stroke-width="1.0"/>
<polyline points="1305.5,560.0 1305.5,661.7 1293.4,672.8" fill="none" stroke="#5e1c21" stroke-width="1.0"/>
<polyline points="1335.2,580.0 1309.2,606.0 1309.2,689.6 1313.8,693.3" fill="none" stroke="#5e1c21" stroke-width="1.0"/>
<polyline points="1351.0,560.0 1351.0,614.4 1378.8,641.3 1378.8,698.8" fill="none" stroke="#5e1c21" stroke-width="1.0"/>
<polyline points="1156.0,698.8 1164.4,695.1 1168.1,695.1" fill="none" stroke="#5e1c21" stroke-width="1.0"/>
<polyline points="1176.4,698.8 1179.2,704.4 1207.1,704.4 1212.6,699.8" fill="none" stroke="#5e1c21" stroke-width="1.0"/>
<polyline points="1195.9,685.8 1201.5,693.3" fill="none" stroke="#5e1c21" stroke-width="1.0"/>
<polyline points="1269.5,698.8 1277.9,695.1 1281.6,695.1" fill="none" stroke="#5e1c21" stroke-width="1.0"/>
<polyline points="1289.9,698.8 1292.7,704.4 1320.6,704.4 1326.1,699.8" fill="none" stroke="#5e1c21" stroke-width="1.0"/>
<polyline points="1309.4,685.8 1315.0,693.3" fill="none" stroke="#5e1c21" stroke-width="1.0"/>
<polyline points="1160.0,400.0 1294.4,400.0" fill="none" stroke="#2e4262" stroke-width="1.0"/>
<polyline points="1160.0,404.0 1298.9,404.0" fill="none" stroke="#2e4262" stroke-width="1.0"/>
<polyline points="1160.0,407.0 1328.9,407.0 1342.2,393.3 1373.3,393.3" fill="none" stroke="#2e4262" stroke-width="1.0"/>
<polyline points="1160.0,424.4 1338.0,424.4 1368.9,394.0" fill="none" stroke="#2e4262" stroke-width="1.0"/>
<polyline points="1160.0,427.4 1341.0,427.4 1373.0,396.0" fill="none" stroke="#2e4262" stroke-width="1.0"/>
<polyline points="1160.0,443.3 1286.7,443.3 1297.8,456.7 1331.1,456.7" fill="none" stroke="#2e4262" stroke-width="1.0"/>
<polyline points="1308.9,442.2 1322.2,453.3" fill="none" stroke="#2e4262" stroke-width="1.0"/>
<polyline points="1160.0,472.2 1384.0,472.2" fill="none" stroke="#2e4262" stroke-width="1.0"/>
<polyline points="1160.0,474.4 1384.0,474.4" fill="none" stroke="#2e4262" stroke-width="1.0"/>
<polyline points="1298.9,486.7 1377.8,486.7" fill="none" stroke="#2e4262" stroke-width="1.0"/>
<polyline points="1160.0,510.0 1377.8,510.0" fill="none" stroke="#2e4262" stroke-width="1.0"/>
<polyline points="1160.0,513.3 1333.0,513.3" fill="none" stroke="#2e4262" stroke-width="1.0"/>
<polyline points="1215.6,575.6 1333.3,575.6" fill="none" stroke="#2e4262" stroke-width="1.0"/>
<polyline points="1160.0,572.2 1308.9,572.2" fill="none" stroke="#2e4262" stroke-width="1.0"/>
<polyline points="1308.9,553.3 1318.0,545.0" fill="none" stroke="#2e4262" stroke-width="1.0"/>
<polyline points="1313.3,564.0 1320.0,560.0 1336.0,560.0" fill="none" stroke="#2e4262" stroke-width="1.0"/>
<polyline points="1310.0,457.0 1330.0,457.0 1336.0,455.0" fill="none" stroke="#2e4262" stroke-width="1.0"/>
<polyline points="1294.4,396.0 1294.4,560.0" fill="none" stroke="#5e1c21" stroke-width="1.0"/>
<polyline points="1302.7,380.0 1302.7,444.0 1296.0,452.0" fill="none" stroke="#5e1c21" stroke-width="1.0"/>
<polyline points="1324.4,412.2 1324.4,430.0 1320.0,434.4" fill="none" stroke="#5e1c21" stroke-width="1.0"/>
<polyline points="1355.6,454.4 1355.6,552.2 1377.8,574.4" fill="none" stroke="#5e1c21" stroke-width="1.0"/>
<polyline points="1351.1,456.7 1351.1,560.0" fill="none" stroke="#5e1c21" stroke-width="1.0"/>
<polyline points="1302.2,505.6 1333.3,505.6 1340.0,512.2" fill="none" stroke="#5e1c21" stroke-width="1.0"/>
<polyline points="1306.7,456.7 1306.7,534.4 1320.0,545.6" fill="none" stroke="#5e1c21" stroke-width="1.0"/>
<polyline points="1324.4,523.3 1324.4,545.6" fill="none" stroke="#5e1c21" stroke-width="1.0"/>
<polyline points="1315.6,514.4 1324.4,523.3" fill="none" stroke="#5e1c21" stroke-width="1.0"/>
<polyline points="1302.0,400.0 1320.0,400.0 1326.0,404.0 1326.0,420.0" fill="none" stroke="#5e1c21" stroke-width="1.0"/>
<polyline points="1310.0,460.0 1318.0,468.0 1322.0,488.0" fill="none" stroke="#5e1c21" stroke-width="1.0"/>
<polyline points="1298.0,470.0 1298.0,560.0 1296.0,566.0" fill="none" stroke="#5e1c21" stroke-width="1.0"/>
<polyline points="1310.0,520.0 1312.0,540.0 1306.0,560.0" fill="none" stroke="#5e1c21" stroke-width="1.0"/>
<polyline points="1311.0,571.0 1320.0,564.0 1330.0,566.0" fill="none" stroke="#5e1c21" stroke-width="1.0"/>
<polyline points="1336.0,396.0 1346.0,396.0 1378.0,430.0" fill="none" stroke="#5e1c21" stroke-width="1.0"/>
<polyline points="1026.0,316.0 1040.0,314.0 1046.0,318.9" fill="none" stroke="#2e4262" stroke-width="1.0"/>
<polyline points="1028.9,321.7 1036.0,316.0 1043.1,317.7" fill="none" stroke="#2e4262" stroke-width="1.0"/>
<polyline points="1033.4,318.3 1030.0,326.0 1052.0,326.0" fill="none" stroke="#2e4262" stroke-width="1.0"/>
<polyline points="1039.1,323.4 1050.0,313.5" fill="none" stroke="#2e4262" stroke-width="1.0"/>
<polyline points="1039.7,317.1 1048.0,325.0 1056.0,330.0" fill="none" stroke="#5e1c21" stroke-width="1.0"/>
<polyline points="1044.0,322.0 1054.0,313.0" fill="none" stroke="#5e1c21" stroke-width="1.0"/>
<polyline points="1046.0,327.0 1055.0,318.0" fill="none" stroke="#5e1c21" stroke-width="1.0"/>
<polyline points="1041.4,337.7 1055.0,325.0" fill="none" stroke="#2e4262" stroke-width="1.0"/>
<polyline points="1030.6,341.7 1036.0,338.0 1048.0,338.0" fill="none" stroke="#2e4262" stroke-width="1.0"/>
<polyline points="1119.7,323.4 1140.9,323.4" fill="none" stroke="#5e1c21" stroke-width="1.0"/>
<polyline points="1148.3,318.9 1170.0,294.9" fill="none" stroke="#5e1c21" stroke-width="1.0"/>
<polyline points="1148.9,321.1 1170.0,300.0" fill="none" stroke="#5e1c21" stroke-width="1.0"/>
<polyline points="1116.3,317.1 1128.0,305.0 1128.0,298.0" fill="none" stroke="#2e4262" stroke-width="1.0"/>
<polyline points="1167.6,614.0 1180.0,628.0" fill="none" stroke="#5e1c21" stroke-width="1.0"/>
<polyline points="1168.8,614.0 1181.9,628.0" fill="none" stroke="#5e1c21" stroke-width="1.0"/>
<polyline points="1170.0,614.0 1183.8,628.0" fill="none" stroke="#5e1c21" stroke-width="1.0"/>
<polyline points="1171.2,614.0 1185.8,628.0" fill="none" stroke="#5e1c21" stroke-width="1.0"/>
<polyline points="1172.4,614.0 1187.7,628.0" fill="none" stroke="#5e1c21" stroke-width="1.0"/>
<polyline points="1357.0,231.5 1384.0,231.5" fill="none" stroke="#2e4262" stroke-width="1.0"/>
<polyline points="1357.0,269.5 1384.0,269.5" fill="none" stroke="#2e4262" stroke-width="1.0"/>
<circle cx="830.80" cy="294.20" r="1.6" fill="#7f96c8"/>
<circle cx="830.80" cy="294.20" r="0.95" fill="#e6ecfa"/>
<circle cx="843.30" cy="298.50" r="1.6" fill="#7f96c8"/>
<circle cx="843.30" cy="298.50" r="0.95" fill="#e6ecfa"/>
<circle cx="862.50" cy="302.50" r="1.6" fill="#7f96c8"/>
<circle cx="862.50" cy="302.50" r="0.95" fill="#e6ecfa"/>
<circle cx="830.80" cy="350.70" r="1.6" fill="#7f96c8"/>
<circle cx="830.80" cy="350.70" r="0.95" fill="#e6ecfa"/>
<circle cx="843.30" cy="355.00" r="1.6" fill="#7f96c8"/>
<circle cx="843.30" cy="355.00" r="0.95" fill="#e6ecfa"/>
<circle cx="862.50" cy="359.00" r="1.6" fill="#7f96c8"/>
<circle cx="862.50" cy="359.00" r="0.95" fill="#e6ecfa"/>
<circle cx="830.80" cy="407.20" r="1.6" fill="#7f96c8"/>
<circle cx="830.80" cy="407.20" r="0.95" fill="#e6ecfa"/>
<circle cx="843.30" cy="411.50" r="1.6" fill="#7f96c8"/>
<circle cx="843.30" cy="411.50" r="0.95" fill="#e6ecfa"/>
<circle cx="862.50" cy="415.50" r="1.6" fill="#7f96c8"/>
<circle cx="862.50" cy="415.50" r="0.95" fill="#e6ecfa"/>
<circle cx="830.80" cy="463.70" r="1.6" fill="#7f96c8"/>
<circle cx="830.80" cy="463.70" r="0.95" fill="#e6ecfa"/>
<circle cx="843.30" cy="468.00" r="1.6" fill="#7f96c8"/>
<circle cx="843.30" cy="468.00" r="0.95" fill="#e6ecfa"/>
<circle cx="862.50" cy="472.00" r="1.6" fill="#7f96c8"/>
<circle cx="862.50" cy="472.00" r="0.95" fill="#e6ecfa"/>
<circle cx="882.50" cy="468.30" r="1.6" fill="#7f96c8"/>
<circle cx="882.50" cy="468.30" r="0.95" fill="#e6ecfa"/>
<circle cx="875.00" cy="431.30" r="1.6" fill="#7f96c8"/>
<circle cx="875.00" cy="431.30" r="0.95" fill="#e6ecfa"/>
<circle cx="850.00" cy="434.20" r="1.6" fill="#7f96c8"/>
<circle cx="850.00" cy="434.20" r="0.95" fill="#e6ecfa"/>
<circle cx="879.20" cy="434.20" r="1.6" fill="#7f96c8"/>
<circle cx="879.20" cy="434.20" r="0.95" fill="#e6ecfa"/>
<circle cx="879.20" cy="491.30" r="1.6" fill="#7f96c8"/>
<circle cx="879.20" cy="491.30" r="0.95" fill="#e6ecfa"/>
<circle cx="850.80" cy="386.70" r="1.6" fill="#7f96c8"/>
<circle cx="850.80" cy="386.70" r="0.95" fill="#e6ecfa"/>
<circle cx="876.70" cy="250.00" r="1.6" fill="#7f96c8"/>
<circle cx="876.70" cy="250.00" r="0.95" fill="#e6ecfa"/>
<circle cx="821.70" cy="250.00" r="1.6" fill="#7f96c8"/>
<circle cx="821.70" cy="250.00" r="0.95" fill="#e6ecfa"/>
<circle cx="821.70" cy="253.30" r="1.6" fill="#7f96c8"/>
<circle cx="821.70" cy="253.30" r="0.95" fill="#e6ecfa"/>
<circle cx="890.00" cy="255.50" r="1.6" fill="#7f96c8"/>
<circle cx="890.00" cy="255.50" r="0.95" fill="#e6ecfa"/>
<circle cx="889.20" cy="302.50" r="1.6" fill="#7f96c8"/>
<circle cx="889.20" cy="302.50" r="0.95" fill="#e6ecfa"/>
<circle cx="903.30" cy="321.70" r="1.6" fill="#7f96c8"/>
<circle cx="903.30" cy="321.70" r="0.95" fill="#e6ecfa"/>
<circle cx="840.80" cy="324.20" r="1.6" fill="#7f96c8"/>
<circle cx="840.80" cy="324.20" r="0.95" fill="#e6ecfa"/>
<circle cx="850.00" cy="328.30" r="1.6" fill="#7f96c8"/>
<circle cx="850.00" cy="328.30" r="0.95" fill="#e6ecfa"/>
<circle cx="846.70" cy="330.80" r="1.6" fill="#7f96c8"/>
<circle cx="846.70" cy="330.80" r="0.95" fill="#e6ecfa"/>
<circle cx="900.80" cy="333.30" r="1.6" fill="#7f96c8"/>
<circle cx="900.80" cy="333.30" r="0.95" fill="#e6ecfa"/>
<circle cx="945.00" cy="315.80" r="1.6" fill="#7f96c8"/>
<circle cx="945.00" cy="315.80" r="0.95" fill="#e6ecfa"/>
<circle cx="969.20" cy="242.00" r="1.6" fill="#7f96c8"/>
<circle cx="969.20" cy="242.00" r="0.95" fill="#e6ecfa"/>
<circle cx="1047.50" cy="246.30" r="1.6" fill="#7f96c8"/>
<circle cx="1047.50" cy="246.30" r="0.95" fill="#e6ecfa"/>
<circle cx="1056.70" cy="263.30" r="1.6" fill="#7f96c8"/>
<circle cx="1056.70" cy="263.30" r="0.95" fill="#e6ecfa"/>
<circle cx="1065.80" cy="275.30" r="1.6" fill="#7f96c8"/>
<circle cx="1065.80" cy="275.30" r="0.95" fill="#e6ecfa"/>
<circle cx="1120.80" cy="256.20" r="1.6" fill="#7f96c8"/>
<circle cx="1120.80" cy="256.20" r="0.95" fill="#e6ecfa"/>
<circle cx="1116.70" cy="264.50" r="1.6" fill="#7f96c8"/>
<circle cx="1116.70" cy="264.50" r="0.95" fill="#e6ecfa"/>
<circle cx="1035.80" cy="297.80" r="1.6" fill="#7f96c8"/>
<circle cx="1035.80" cy="297.80" r="0.95" fill="#e6ecfa"/>
<circle cx="1068.00" cy="297.80" r="1.6" fill="#7f96c8"/>
<circle cx="1068.00" cy="297.80" r="0.95" fill="#e6ecfa"/>
<circle cx="1113.30" cy="297.80" r="1.6" fill="#7f96c8"/>
<circle cx="1113.30" cy="297.80" r="0.95" fill="#e6ecfa"/>
<circle cx="1118.30" cy="294.50" r="1.6" fill="#7f96c8"/>
<circle cx="1118.30" cy="294.50" r="0.95" fill="#e6ecfa"/>
<circle cx="984.70" cy="318.30" r="1.6" fill="#7f96c8"/>
<circle cx="984.70" cy="318.30" r="0.95" fill="#e6ecfa"/>
<circle cx="1030.80" cy="342.00" r="1.6" fill="#7f96c8"/>
<circle cx="1030.80" cy="342.00" r="0.95" fill="#e6ecfa"/>
<circle cx="1003.30" cy="343.30" r="1.6" fill="#7f96c8"/>
<circle cx="1003.30" cy="343.30" r="0.95" fill="#e6ecfa"/>
<circle cx="1035.80" cy="345.00" r="1.6" fill="#7f96c8"/>
<circle cx="1035.80" cy="345.00" r="0.95" fill="#e6ecfa"/>
<circle cx="1056.70" cy="337.50" r="1.6" fill="#7f96c8"/>
<circle cx="1056.70" cy="337.50" r="0.95" fill="#e6ecfa"/>
<circle cx="1061.20" cy="329.70" r="1.6" fill="#7f96c8"/>
<circle cx="1061.20" cy="329.70" r="0.95" fill="#e6ecfa"/>
<circle cx="1196.00" cy="256.50" r="1.6" fill="#7f96c8"/>
<circle cx="1196.00" cy="256.50" r="0.95" fill="#e6ecfa"/>
<circle cx="1271.70" cy="256.50" r="1.6" fill="#7f96c8"/>
<circle cx="1271.70" cy="256.50" r="0.95" fill="#e6ecfa"/>
<circle cx="1338.80" cy="258.30" r="1.6" fill="#7f96c8"/>
<circle cx="1338.80" cy="258.30" r="0.95" fill="#e6ecfa"/>
<circle cx="1188.60" cy="261.20" r="1.6" fill="#7f96c8"/>
<circle cx="1188.60" cy="261.20" r="0.95" fill="#e6ecfa"/>
<circle cx="1264.20" cy="261.20" r="1.6" fill="#7f96c8"/>
<circle cx="1264.20" cy="261.20" r="0.95" fill="#e6ecfa"/>
<circle cx="1192.40" cy="264.60" r="1.6" fill="#7f96c8"/>
<circle cx="1192.40" cy="264.60" r="0.95" fill="#e6ecfa"/>
<circle cx="1268.00" cy="264.60" r="1.6" fill="#7f96c8"/>
<circle cx="1268.00" cy="264.60" r="0.95" fill="#e6ecfa"/>
<circle cx="1346.00" cy="249.30" r="1.6" fill="#7f96c8"/>
<circle cx="1346.00" cy="249.30" r="0.95" fill="#e6ecfa"/>
<circle cx="1287.80" cy="382.70" r="1.6" fill="#7f96c8"/>
<circle cx="1287.80" cy="382.70" r="0.95" fill="#e6ecfa"/>
<circle cx="1296.30" cy="386.10" r="1.6" fill="#7f96c8"/>
<circle cx="1296.30" cy="386.10" r="0.95" fill="#e6ecfa"/>
<circle cx="1182.70" cy="407.10" r="1.6" fill="#7f96c8"/>
<circle cx="1182.70" cy="407.10" r="0.95" fill="#e6ecfa"/>
<circle cx="1145.00" cy="454.00" r="1.6" fill="#7f96c8"/>
<circle cx="1145.00" cy="454.00" r="0.95" fill="#e6ecfa"/>
<circle cx="1150.00" cy="500.00" r="1.6" fill="#7f96c8"/>
<circle cx="1150.00" cy="500.00" r="0.95" fill="#e6ecfa"/>
<circle cx="1020.00" cy="423.00" r="1.6" fill="#7f96c8"/>
<circle cx="1020.00" cy="423.00" r="0.95" fill="#e6ecfa"/>
<circle cx="1020.00" cy="427.00" r="1.6" fill="#7f96c8"/>
<circle cx="1020.00" cy="427.00" r="0.95" fill="#e6ecfa"/>
<circle cx="995.00" cy="402.00" r="1.6" fill="#7f96c8"/>
<circle cx="995.00" cy="402.00" r="0.95" fill="#e6ecfa"/>
<circle cx="1050.00" cy="400.00" r="1.6" fill="#7f96c8"/>
<circle cx="1050.00" cy="400.00" r="0.95" fill="#e6ecfa"/>
<circle cx="1059.00" cy="404.00" r="1.6" fill="#7f96c8"/>
<circle cx="1059.00" cy="404.00" r="0.95" fill="#e6ecfa"/>
<circle cx="1031.00" cy="484.00" r="1.6" fill="#7f96c8"/>
<circle cx="1031.00" cy="484.00" r="0.95" fill="#e6ecfa"/>
<circle cx="891.00" cy="676.00" r="1.6" fill="#7f96c8"/>
<circle cx="891.00" cy="676.00" r="0.95" fill="#e6ecfa"/>
<circle cx="847.00" cy="573.00" r="1.6" fill="#7f96c8"/>
<circle cx="847.00" cy="573.00" r="0.95" fill="#e6ecfa"/>
<circle cx="903.00" cy="573.00" r="1.6" fill="#7f96c8"/>
<circle cx="903.00" cy="573.00" r="0.95" fill="#e6ecfa"/>
<circle cx="882.00" cy="576.00" r="1.6" fill="#7f96c8"/>
<circle cx="882.00" cy="576.00" r="0.95" fill="#e6ecfa"/>
<circle cx="947.00" cy="590.00" r="1.6" fill="#7f96c8"/>
<circle cx="947.00" cy="590.00" r="0.95" fill="#e6ecfa"/>
<circle cx="845.00" cy="582.00" r="1.6" fill="#7f96c8"/>
<circle cx="845.00" cy="582.00" r="0.95" fill="#e6ecfa"/>
<circle cx="1063.30" cy="631.10" r="1.6" fill="#7f96c8"/>
<circle cx="1063.30" cy="631.10" r="0.95" fill="#e6ecfa"/>
<circle cx="1162.20" cy="573.30" r="1.6" fill="#7f96c8"/>
<circle cx="1162.20" cy="573.30" r="0.95" fill="#e6ecfa"/>
<circle cx="1284.10" cy="617.10" r="1.6" fill="#7f96c8"/>
<circle cx="1284.10" cy="617.10" r="0.95" fill="#e6ecfa"/>
<circle cx="1201.50" cy="619.60" r="1.6" fill="#7f96c8"/>
<circle cx="1201.50" cy="619.60" r="0.95" fill="#e6ecfa"/>
<circle cx="1351.00" cy="619.60" r="1.6" fill="#7f96c8"/>
<circle cx="1351.00" cy="619.60" r="0.95" fill="#e6ecfa"/>
<circle cx="1212.60" cy="624.60" r="1.6" fill="#7f96c8"/>
<circle cx="1212.60" cy="624.60" r="0.95" fill="#e6ecfa"/>
<circle cx="1261.80" cy="634.40" r="1.6" fill="#7f96c8"/>
<circle cx="1261.80" cy="634.40" r="0.95" fill="#e6ecfa"/>
<circle cx="1194.00" cy="626.10" r="1.6" fill="#7f96c8"/>
<circle cx="1194.00" cy="626.10" r="0.95" fill="#e6ecfa"/>
<circle cx="1183.90" cy="629.20" r="1.6" fill="#7f96c8"/>
<circle cx="1183.90" cy="629.20" r="0.95" fill="#e6ecfa"/>
<circle cx="1329.60" cy="631.60" r="1.6" fill="#7f96c8"/>
<circle cx="1329.60" cy="631.60" r="0.95" fill="#e6ecfa"/>
<circle cx="1208.90" cy="637.90" r="1.6" fill="#7f96c8"/>
<circle cx="1208.90" cy="637.90" r="0.95" fill="#e6ecfa"/>
<circle cx="1213.60" cy="651.50" r="1.6" fill="#7f96c8"/>
<circle cx="1213.60" cy="651.50" r="0.95" fill="#e6ecfa"/>
<circle cx="1203.90" cy="664.90" r="1.6" fill="#7f96c8"/>
<circle cx="1203.90" cy="664.90" r="0.95" fill="#e6ecfa"/>
<circle cx="1195.00" cy="668.20" r="1.6" fill="#7f96c8"/>
<circle cx="1195.00" cy="668.20" r="0.95" fill="#e6ecfa"/>
<circle cx="1293.40" cy="673.80" r="1.6" fill="#7f96c8"/>
<circle cx="1293.40" cy="673.80" r="0.95" fill="#e6ecfa"/>
<circle cx="1191.30" cy="682.10" r="1.6" fill="#7f96c8"/>
<circle cx="1191.30" cy="682.10" r="0.95" fill="#e6ecfa"/>
<circle cx="1292.50" cy="682.10" r="1.6" fill="#7f96c8"/>
<circle cx="1292.50" cy="682.10" r="0.95" fill="#e6ecfa"/>
<circle cx="1232.20" cy="422.20" r="1.6" fill="#7f96c8"/>
<circle cx="1232.20" cy="422.20" r="0.95" fill="#e6ecfa"/>
<circle cx="1294.40" cy="400.00" r="1.6" fill="#7f96c8"/>
<circle cx="1294.40" cy="400.00" r="0.95" fill="#e6ecfa"/>
<circle cx="1298.90" cy="404.00" r="1.6" fill="#7f96c8"/>
<circle cx="1298.90" cy="404.00" r="0.95" fill="#e6ecfa"/>
<circle cx="1308.90" cy="442.20" r="1.6" fill="#7f96c8"/>
<circle cx="1308.90" cy="442.20" r="0.95" fill="#e6ecfa"/>
<circle cx="1322.20" cy="453.30" r="1.6" fill="#7f96c8"/>
<circle cx="1322.20" cy="453.30" r="0.95" fill="#e6ecfa"/>
<circle cx="1298.90" cy="486.70" r="1.6" fill="#7f96c8"/>
<circle cx="1298.90" cy="486.70" r="0.95" fill="#e6ecfa"/>
<circle cx="1377.80" cy="486.70" r="1.6" fill="#7f96c8"/>
<circle cx="1377.80" cy="486.70" r="0.95" fill="#e6ecfa"/>
<circle cx="1215.60" cy="575.60" r="1.6" fill="#7f96c8"/>
<circle cx="1215.60" cy="575.60" r="0.95" fill="#e6ecfa"/>
<circle cx="1333.30" cy="575.60" r="1.6" fill="#7f96c8"/>
<circle cx="1333.30" cy="575.60" r="0.95" fill="#e6ecfa"/>
<circle cx="1308.90" cy="572.20" r="1.6" fill="#7f96c8"/>
<circle cx="1308.90" cy="572.20" r="0.95" fill="#e6ecfa"/>
<circle cx="1308.90" cy="553.30" r="1.6" fill="#7f96c8"/>
<circle cx="1308.90" cy="553.30" r="0.95" fill="#e6ecfa"/>
<circle cx="1313.30" cy="564.00" r="1.6" fill="#7f96c8"/>
<circle cx="1313.30" cy="564.00" r="0.95" fill="#e6ecfa"/>
<circle cx="1347.00" cy="561.00" r="1.6" fill="#7f96c8"/>
<circle cx="1347.00" cy="561.00" r="0.95" fill="#e6ecfa"/>
<circle cx="1330.00" cy="457.00" r="1.6" fill="#7f96c8"/>
<circle cx="1330.00" cy="457.00" r="0.95" fill="#e6ecfa"/>
<circle cx="1034.00" cy="302.30" r="1.6" fill="#7f96c8"/>
<circle cx="1034.00" cy="302.30" r="0.95" fill="#e6ecfa"/>
<circle cx="1047.10" cy="304.60" r="1.6" fill="#7f96c8"/>
<circle cx="1047.10" cy="304.60" r="0.95" fill="#e6ecfa"/>
<circle cx="1050.60" cy="304.60" r="1.6" fill="#7f96c8"/>
<circle cx="1050.60" cy="304.60" r="0.95" fill="#e6ecfa"/>
<circle cx="1053.40" cy="304.60" r="1.6" fill="#7f96c8"/>
<circle cx="1053.40" cy="304.60" r="0.95" fill="#e6ecfa"/>
<circle cx="1026.00" cy="316.00" r="1.6" fill="#7f96c8"/>
<circle cx="1026.00" cy="316.00" r="0.95" fill="#e6ecfa"/>
<circle cx="1033.40" cy="318.30" r="1.6" fill="#7f96c8"/>
<circle cx="1033.40" cy="318.30" r="0.95" fill="#e6ecfa"/>
<circle cx="1039.70" cy="317.10" r="1.6" fill="#7f96c8"/>
<circle cx="1039.70" cy="317.10" r="0.95" fill="#e6ecfa"/>
<circle cx="1043.10" cy="317.70" r="1.6" fill="#7f96c8"/>
<circle cx="1043.10" cy="317.70" r="0.95" fill="#e6ecfa"/>
<circle cx="1046.00" cy="318.90" r="1.6" fill="#7f96c8"/>
<circle cx="1046.00" cy="318.90" r="0.95" fill="#e6ecfa"/>
<circle cx="1050.60" cy="317.70" r="1.6" fill="#7f96c8"/>
<circle cx="1050.60" cy="317.70" r="0.95" fill="#e6ecfa"/>
<circle cx="1028.90" cy="321.70" r="1.6" fill="#7f96c8"/>
<circle cx="1028.90" cy="321.70" r="0.95" fill="#e6ecfa"/>
<circle cx="1039.10" cy="323.40" r="1.6" fill="#7f96c8"/>
<circle cx="1039.10" cy="323.40" r="0.95" fill="#e6ecfa"/>
<circle cx="1050.00" cy="324.60" r="1.6" fill="#7f96c8"/>
<circle cx="1050.00" cy="324.60" r="0.95" fill="#e6ecfa"/>
<circle cx="1050.00" cy="327.40" r="1.6" fill="#7f96c8"/>
<circle cx="1050.00" cy="327.40" r="0.95" fill="#e6ecfa"/>
<circle cx="1041.40" cy="337.70" r="1.6" fill="#7f96c8"/>
<circle cx="1041.40" cy="337.70" r="0.95" fill="#e6ecfa"/>
<circle cx="1030.60" cy="341.70" r="1.6" fill="#7f96c8"/>
<circle cx="1030.60" cy="341.70" r="0.95" fill="#e6ecfa"/>
<circle cx="1035.70" cy="345.10" r="1.6" fill="#7f96c8"/>
<circle cx="1035.70" cy="345.10" r="0.95" fill="#e6ecfa"/>
<circle cx="1116.30" cy="317.10" r="1.6" fill="#7f96c8"/>
<circle cx="1116.30" cy="317.10" r="0.95" fill="#e6ecfa"/>
<circle cx="1115.70" cy="321.10" r="1.6" fill="#7f96c8"/>
<circle cx="1115.70" cy="321.10" r="0.95" fill="#e6ecfa"/>
<circle cx="1126.60" cy="317.70" r="1.6" fill="#7f96c8"/>
<circle cx="1126.60" cy="317.70" r="0.95" fill="#e6ecfa"/>
<circle cx="1357.00" cy="231.50" r="1.6" fill="#7f96c8"/>
<circle cx="1357.00" cy="231.50" r="0.95" fill="#e6ecfa"/>
<circle cx="1357.00" cy="269.50" r="1.6" fill="#7f96c8"/>
<circle cx="1357.00" cy="269.50" r="0.95" fill="#e6ecfa"/>
<circle cx="756" cy="189" r="6" fill="#fff"/>
<circle cx="756" cy="718" r="6" fill="#fff"/>
<text x="806.50" y="228.90" font-size="3.94" textLength="12.00" lengthAdjust="spacingAndGlyphs" fill="#d9d08f">J_QWIIC</text>
<rect x="799.75" y="237.80" width="4.50" height="7.00" fill="#d63a3a" />
<rect x="820.75" y="237.80" width="4.50" height="7.00" fill="#d63a3a" />
<rect x="805.50" y="247.20" width="2.30" height="6.60" fill="#d63a3a" />
<rect x="809.40" y="247.20" width="2.30" height="6.60" fill="#d63a3a" />
<rect x="813.30" y="247.20" width="2.30" height="6.60" fill="#d63a3a" />
<rect x="817.20" y="247.20" width="2.30" height="6.60" fill="#d63a3a" />
<text x="810.50" y="275.40" font-size="8.33" font-family="Liberation Sans" textLength="4.00" lengthAdjust="spacingAndGlyphs" fill="#d9d08f">1</text>
<text x="882.00" y="228.90" font-size="3.94" textLength="12.00" lengthAdjust="spacingAndGlyphs" fill="#d9d08f">J_QWIIC</text>
<rect x="875.25" y="237.80" width="4.50" height="7.00" fill="#d63a3a" />
<rect x="896.25" y="237.80" width="4.50" height="7.00" fill="#d63a3a" />
<rect x="881.00" y="247.20" width="2.30" height="6.60" fill="#d63a3a" />
<rect x="884.90" y="247.20" width="2.30" height="6.60" fill="#d63a3a" />
<rect x="888.80" y="247.20" width="2.30" height="6.60" fill="#d63a3a" />
<rect x="892.70" y="247.20" width="2.30" height="6.60" fill="#d63a3a" />
<text x="886.00" y="275.40" font-size="8.33" font-family="Liberation Sans" textLength="4.00" lengthAdjust="spacingAndGlyphs" fill="#d9d08f">2</text>
<text x="957.50" y="228.90" font-size="3.94" textLength="12.00" lengthAdjust="spacingAndGlyphs" fill="#d9d08f">J_QWIIC</text>
<rect x="950.75" y="237.80" width="4.50" height="7.00" fill="#d63a3a" />
<rect x="971.75" y="237.80" width="4.50" height="7.00" fill="#d63a3a" />
<rect x="956.50" y="247.20" width="2.30" height="6.60" fill="#d63a3a" />
<rect x="960.40" y="247.20" width="2.30" height="6.60" fill="#d63a3a" />
<rect x="964.30" y="247.20" width="2.30" height="6.60" fill="#d63a3a" />
<rect x="968.20" y="247.20" width="2.30" height="6.60" fill="#d63a3a" />
<text x="961.50" y="275.40" font-size="8.33" font-family="Liberation Sans" textLength="4.00" lengthAdjust="spacingAndGlyphs" fill="#d9d08f">3</text>
<text x="1033.00" y="228.90" font-size="3.94" textLength="12.00" lengthAdjust="spacingAndGlyphs" fill="#d9d08f">J_QWIIC</text>
<rect x="1026.25" y="237.80" width="4.50" height="7.00" fill="#d63a3a" />
<rect x="1047.25" y="237.80" width="4.50" height="7.00" fill="#d63a3a" />
<rect x="1032.00" y="247.20" width="2.30" height="6.60" fill="#d63a3a" />
<rect x="1035.90" y="247.20" width="2.30" height="6.60" fill="#d63a3a" />
<rect x="1039.80" y="247.20" width="2.30" height="6.60" fill="#d63a3a" />
<rect x="1043.70" y="247.20" width="2.30" height="6.60" fill="#d63a3a" />
<text x="1037.00" y="275.40" font-size="8.33" font-family="Liberation Sans" textLength="4.00" lengthAdjust="spacingAndGlyphs" fill="#d9d08f">4</text>
<text x="1108.50" y="228.90" font-size="3.94" textLength="12.00" lengthAdjust="spacingAndGlyphs" fill="#d9d08f">J_QWIIC</text>
<rect x="1101.75" y="237.80" width="4.50" height="7.00" fill="#d63a3a" />
<rect x="1122.75" y="237.80" width="4.50" height="7.00" fill="#d63a3a" />
<rect x="1107.50" y="247.20" width="2.30" height="6.60" fill="#d63a3a" />
<rect x="1111.40" y="247.20" width="2.30" height="6.60" fill="#d63a3a" />
<rect x="1115.30" y="247.20" width="2.30" height="6.60" fill="#d63a3a" />
<rect x="1119.20" y="247.20" width="2.30" height="6.60" fill="#d63a3a" />
<text x="1112.50" y="275.40" font-size="8.33" font-family="Liberation Sans" textLength="4.00" lengthAdjust="spacingAndGlyphs" fill="#d9d08f">5</text>
<text x="1184.00" y="228.90" font-size="3.94" textLength="12.00" lengthAdjust="spacingAndGlyphs" fill="#d9d08f">J_QWIIC</text>
<rect x="1177.25" y="237.80" width="4.50" height="7.00" fill="#d63a3a" />
<rect x="1198.25" y="237.80" width="4.50" height="7.00" fill="#d63a3a" />
<rect x="1183.00" y="247.20" width="2.30" height="6.60" fill="#d63a3a" />
<rect x="1186.90" y="247.20" width="2.30" height="6.60" fill="#d63a3a" />
<rect x="1190.80" y="247.20" width="2.30" height="6.60" fill="#d63a3a" />
<rect x="1194.70" y="247.20" width="2.30" height="6.60" fill="#d63a3a" />
<text x="1188.00" y="275.40" font-size="8.33" font-family="Liberation Sans" textLength="4.00" lengthAdjust="spacingAndGlyphs" fill="#d9d08f">6</text>
<text x="1260.00" y="228.90" font-size="3.94" textLength="12.00" lengthAdjust="spacingAndGlyphs" fill="#d9d08f">J_QWIIC</text>
<rect x="1253.25" y="237.80" width="4.50" height="7.00" fill="#d63a3a" />
<rect x="1274.25" y="237.80" width="4.50" height="7.00" fill="#d63a3a" />
<rect x="1259.00" y="247.20" width="2.30" height="6.60" fill="#d63a3a" />
<rect x="1262.90" y="247.20" width="2.30" height="6.60" fill="#d63a3a" />
<rect x="1266.80" y="247.20" width="2.30" height="6.60" fill="#d63a3a" />
<rect x="1270.70" y="247.20" width="2.30" height="6.60" fill="#d63a3a" />
<text x="1264.00" y="275.40" font-size="8.33" font-family="Liberation Sans" textLength="4.00" lengthAdjust="spacingAndGlyphs" fill="#d9d08f">7</text>
<text x="1029.40" y="222.60" font-size="9.44" font-family="Liberation Sans" textLength="20.60" lengthAdjust="spacingAndGlyphs" fill="#d9d08f">QWIIC</text>
<circle cx="782.60" cy="302.40" r="2.90" fill="#5f90e4"/>
<circle cx="782.60" cy="302.40" r="1.51" fill="#f6f8ff"/>
<circle cx="790.10" cy="302.40" r="2.90" fill="#5f90e4"/>
<circle cx="790.10" cy="302.40" r="1.51" fill="#f6f8ff"/>
<circle cx="797.60" cy="302.40" r="2.90" fill="#5f90e4"/>
<circle cx="797.60" cy="302.40" r="1.51" fill="#f6f8ff"/>
<circle cx="805.10" cy="302.40" r="2.90" fill="#5f90e4"/>
<circle cx="805.10" cy="302.40" r="1.51" fill="#f6f8ff"/>
<text x="780.00" y="288.80" font-size="4.85" textLength="27.00" lengthAdjust="spacingAndGlyphs" fill="#a59d62">E+ E- A+ A-</text>
<text x="802.00" y="316.95" font-size="9.31" font-family="Liberation Sans" textLength="22.00" lengthAdjust="spacingAndGlyphs" fill="#d9d08f">U_LC4</text>
<text x="764.00" y="332.05" font-size="9.31" font-family="Liberation Sans" textLength="22.00" lengthAdjust="spacingAndGlyphs" fill="#d9d08f">J_LC4</text>
<rect x="832.40" y="287.90" width="2.60" height="8.20" fill="#d63a3a" />
<rect x="832.40" y="308.90" width="2.60" height="8.20" fill="#d63a3a" />
<rect x="837.20" y="287.90" width="2.60" height="8.20" fill="#d63a3a" />
<rect x="837.20" y="308.90" width="2.60" height="8.20" fill="#d63a3a" />
<rect x="842.00" y="287.90" width="2.60" height="8.20" fill="#d63a3a" />
<rect x="842.00" y="308.90" width="2.60" height="8.20" fill="#d63a3a" />
<rect x="846.80" y="287.90" width="2.60" height="8.20" fill="#d63a3a" />
<rect x="846.80" y="308.90" width="2.60" height="8.20" fill="#d63a3a" />
<rect x="851.60" y="287.90" width="2.60" height="8.20" fill="#d63a3a" />
<rect x="851.60" y="308.90" width="2.60" height="8.20" fill="#d63a3a" />
<rect x="856.40" y="287.90" width="2.60" height="8.20" fill="#d63a3a" />
<rect x="856.40" y="308.90" width="2.60" height="8.20" fill="#d63a3a" />
<rect x="861.20" y="287.90" width="2.60" height="8.20" fill="#d63a3a" />
<rect x="861.20" y="308.90" width="2.60" height="8.20" fill="#d63a3a" />
<rect x="866.00" y="287.90" width="2.60" height="8.20" fill="#d63a3a" />
<rect x="866.00" y="308.90" width="2.60" height="8.20" fill="#d63a3a" />
<rect x="873.50" y="298.90" width="6.00" height="7.00" fill="none" stroke="#7a744c" stroke-width="0.6"/>
<rect x="873.65" y="300.60" width="2.10" height="3.00" fill="#d63a3a" />
<rect x="877.25" y="300.60" width="2.10" height="3.00" fill="#d63a3a" />
<text x="873.50" y="298.10" font-size="3.64" textLength="6.00" lengthAdjust="spacingAndGlyphs" fill="#d9d08f">10k</text>
<circle cx="782.60" cy="358.90" r="2.90" fill="#5f90e4"/>
<circle cx="782.60" cy="358.90" r="1.51" fill="#f6f8ff"/>
<circle cx="790.10" cy="358.90" r="2.90" fill="#5f90e4"/>
<circle cx="790.10" cy="358.90" r="1.51" fill="#f6f8ff"/>
<circle cx="797.60" cy="358.90" r="2.90" fill="#5f90e4"/>
<circle cx="797.60" cy="358.90" r="1.51" fill="#f6f8ff"/>
<circle cx="805.10" cy="358.90" r="2.90" fill="#5f90e4"/>
<circle cx="805.10" cy="358.90" r="1.51" fill="#f6f8ff"/>
<text x="780.00" y="345.30" font-size="4.85" textLength="27.00" lengthAdjust="spacingAndGlyphs" fill="#a59d62">E+ E- A+ A-</text>
<text x="802.00" y="373.45" font-size="9.31" font-family="Liberation Sans" textLength="22.00" lengthAdjust="spacingAndGlyphs" fill="#d9d08f">U_LC3</text>
<text x="764.00" y="388.55" font-size="9.31" font-family="Liberation Sans" textLength="22.00" lengthAdjust="spacingAndGlyphs" fill="#d9d08f">J_LC3</text>
<rect x="832.40" y="344.40" width="2.60" height="8.20" fill="#d63a3a" />
<rect x="832.40" y="365.40" width="2.60" height="8.20" fill="#d63a3a" />
<rect x="837.20" y="344.40" width="2.60" height="8.20" fill="#d63a3a" />
<rect x="837.20" y="365.40" width="2.60" height="8.20" fill="#d63a3a" />
<rect x="842.00" y="344.40" width="2.60" height="8.20" fill="#d63a3a" />
<rect x="842.00" y="365.40" width="2.60" height="8.20" fill="#d63a3a" />
<rect x="846.80" y="344.40" width="2.60" height="8.20" fill="#d63a3a" />
<rect x="846.80" y="365.40" width="2.60" height="8.20" fill="#d63a3a" />
<rect x="851.60" y="344.40" width="2.60" height="8.20" fill="#d63a3a" />
<rect x="851.60" y="365.40" width="2.60" height="8.20" fill="#d63a3a" />
<rect x="856.40" y="344.40" width="2.60" height="8.20" fill="#d63a3a" />
<rect x="856.40" y="365.40" width="2.60" height="8.20" fill="#d63a3a" />
<rect x="861.20" y="344.40" width="2.60" height="8.20" fill="#d63a3a" />
<rect x="861.20" y="365.40" width="2.60" height="8.20" fill="#d63a3a" />
<rect x="866.00" y="344.40" width="2.60" height="8.20" fill="#d63a3a" />
<rect x="866.00" y="365.40" width="2.60" height="8.20" fill="#d63a3a" />
<rect x="873.50" y="355.40" width="6.00" height="7.00" fill="none" stroke="#7a744c" stroke-width="0.6"/>
<rect x="873.65" y="357.10" width="2.10" height="3.00" fill="#d63a3a" />
<rect x="877.25" y="357.10" width="2.10" height="3.00" fill="#d63a3a" />
<text x="873.50" y="354.60" font-size="3.64" textLength="6.00" lengthAdjust="spacingAndGlyphs" fill="#d9d08f">10k</text>
<circle cx="782.60" cy="415.40" r="2.90" fill="#5f90e4"/>
<circle cx="782.60" cy="415.40" r="1.51" fill="#f6f8ff"/>
<circle cx="790.10" cy="415.40" r="2.90" fill="#5f90e4"/>
<circle cx="790.10" cy="415.40" r="1.51" fill="#f6f8ff"/>
<circle cx="797.60" cy="415.40" r="2.90" fill="#5f90e4"/>
<circle cx="797.60" cy="415.40" r="1.51" fill="#f6f8ff"/>
<circle cx="805.10" cy="415.40" r="2.90" fill="#5f90e4"/>
<circle cx="805.10" cy="415.40" r="1.51" fill="#f6f8ff"/>
<text x="780.00" y="401.80" font-size="4.85" textLength="27.00" lengthAdjust="spacingAndGlyphs" fill="#a59d62">E+ E- A+ A-</text>
<text x="802.00" y="429.95" font-size="9.31" font-family="Liberation Sans" textLength="22.00" lengthAdjust="spacingAndGlyphs" fill="#d9d08f">U_LC2</text>
<text x="764.00" y="445.05" font-size="9.31" font-family="Liberation Sans" textLength="22.00" lengthAdjust="spacingAndGlyphs" fill="#d9d08f">J_LC2</text>
<rect x="832.40" y="400.90" width="2.60" height="8.20" fill="#d63a3a" />
<rect x="832.40" y="421.90" width="2.60" height="8.20" fill="#d63a3a" />
<rect x="837.20" y="400.90" width="2.60" height="8.20" fill="#d63a3a" />
<rect x="837.20" y="421.90" width="2.60" height="8.20" fill="#d63a3a" />
<rect x="842.00" y="400.90" width="2.60" height="8.20" fill="#d63a3a" />
<rect x="842.00" y="421.90" width="2.60" height="8.20" fill="#d63a3a" />
<rect x="846.80" y="400.90" width="2.60" height="8.20" fill="#d63a3a" />
<rect x="846.80" y="421.90" width="2.60" height="8.20" fill="#d63a3a" />
<rect x="851.60" y="400.90" width="2.60" height="8.20" fill="#d63a3a" />
<rect x="851.60" y="421.90" width="2.60" height="8.20" fill="#d63a3a" />
<rect x="856.40" y="400.90" width="2.60" height="8.20" fill="#d63a3a" />
<rect x="856.40" y="421.90" width="2.60" height="8.20" fill="#d63a3a" />
<rect x="861.20" y="400.90" width="2.60" height="8.20" fill="#d63a3a" />
<rect x="861.20" y="421.90" width="2.60" height="8.20" fill="#d63a3a" />
<rect x="866.00" y="400.90" width="2.60" height="8.20" fill="#d63a3a" />
<rect x="866.00" y="421.90" width="2.60" height="8.20" fill="#d63a3a" />
<rect x="873.50" y="411.90" width="6.00" height="7.00" fill="none" stroke="#7a744c" stroke-width="0.6"/>
<rect x="873.65" y="413.60" width="2.10" height="3.00" fill="#d63a3a" />
<rect x="877.25" y="413.60" width="2.10" height="3.00" fill="#d63a3a" />
<text x="873.50" y="411.10" font-size="3.64" textLength="6.00" lengthAdjust="spacingAndGlyphs" fill="#d9d08f">10k</text>
<circle cx="782.60" cy="471.90" r="2.90" fill="#5f90e4"/>
<circle cx="782.60" cy="471.90" r="1.51" fill="#f6f8ff"/>
<circle cx="790.10" cy="471.90" r="2.90" fill="#5f90e4"/>
<circle cx="790.10" cy="471.90" r="1.51" fill="#f6f8ff"/>
<circle cx="797.60" cy="471.90" r="2.90" fill="#5f90e4"/>
<circle cx="797.60" cy="471.90" r="1.51" fill="#f6f8ff"/>
<circle cx="805.10" cy="471.90" r="2.90" fill="#5f90e4"/>
<circle cx="805.10" cy="471.90" r="1.51" fill="#f6f8ff"/>
<text x="780.00" y="458.30" font-size="4.85" textLength="27.00" lengthAdjust="spacingAndGlyphs" fill="#a59d62">E+ E- A+ A-</text>
<text x="802.00" y="486.45" font-size="9.31" font-family="Liberation Sans" textLength="22.00" lengthAdjust="spacingAndGlyphs" fill="#d9d08f">U_LC1</text>
<text x="764.00" y="501.55" font-size="9.31" font-family="Liberation Sans" textLength="22.00" lengthAdjust="spacingAndGlyphs" fill="#d9d08f">J_LC1</text>
<rect x="832.40" y="457.40" width="2.60" height="8.20" fill="#d63a3a" />
<rect x="832.40" y="478.40" width="2.60" height="8.20" fill="#d63a3a" />
<rect x="837.20" y="457.40" width="2.60" height="8.20" fill="#d63a3a" />
<rect x="837.20" y="478.40" width="2.60" height="8.20" fill="#d63a3a" />
<rect x="842.00" y="457.40" width="2.60" height="8.20" fill="#d63a3a" />
<rect x="842.00" y="478.40" width="2.60" height="8.20" fill="#d63a3a" />
<rect x="846.80" y="457.40" width="2.60" height="8.20" fill="#d63a3a" />
<rect x="846.80" y="478.40" width="2.60" height="8.20" fill="#d63a3a" />
<rect x="851.60" y="457.40" width="2.60" height="8.20" fill="#d63a3a" />
<rect x="851.60" y="478.40" width="2.60" height="8.20" fill="#d63a3a" />
<rect x="856.40" y="457.40" width="2.60" height="8.20" fill="#d63a3a" />
<rect x="856.40" y="478.40" width="2.60" height="8.20" fill="#d63a3a" />
<rect x="861.20" y="457.40" width="2.60" height="8.20" fill="#d63a3a" />
<rect x="861.20" y="478.40" width="2.60" height="8.20" fill="#d63a3a" />
<rect x="866.00" y="457.40" width="2.60" height="8.20" fill="#d63a3a" />
<rect x="866.00" y="478.40" width="2.60" height="8.20" fill="#d63a3a" />
<rect x="873.50" y="468.40" width="6.00" height="7.00" fill="none" stroke="#7a744c" stroke-width="0.6"/>
<rect x="873.65" y="470.10" width="2.10" height="3.00" fill="#d63a3a" />
<rect x="877.25" y="470.10" width="2.10" height="3.00" fill="#d63a3a" />
<text x="873.50" y="467.60" font-size="3.64" textLength="6.00" lengthAdjust="spacingAndGlyphs" fill="#d9d08f">10k</text>
<rect x="926.10" y="412.70" width="5.80" height="5.80" fill="#5f90e4"/>
<circle cx="929.00" cy="415.60" r="1.51" fill="#f6f8ff"/>
<text x="926.70" y="411.70" font-size="3.33" textLength="4.60" lengthAdjust="spacingAndGlyphs" fill="#a59d62">D0</text>
<circle cx="938.59" cy="415.60" r="2.90" fill="#5f90e4"/>
<circle cx="938.59" cy="415.60" r="1.51" fill="#f6f8ff"/>
<text x="936.29" y="411.70" font-size="3.33" textLength="4.60" lengthAdjust="spacingAndGlyphs" fill="#a59d62">D1</text>
<circle cx="948.18" cy="415.60" r="2.90" fill="#5f90e4"/>
<circle cx="948.18" cy="415.60" r="1.51" fill="#f6f8ff"/>
<text x="945.88" y="411.70" font-size="3.33" textLength="4.60" lengthAdjust="spacingAndGlyphs" fill="#a59d62">D2</text>
<circle cx="957.77" cy="415.60" r="2.90" fill="#5f90e4"/>
<circle cx="957.77" cy="415.60" r="1.51" fill="#f6f8ff"/>
<text x="955.47" y="411.70" font-size="3.33" textLength="4.60" lengthAdjust="spacingAndGlyphs" fill="#a59d62">D3</text>
<circle cx="967.36" cy="415.60" r="2.90" fill="#5f90e4"/>
<circle cx="967.36" cy="415.60" r="1.51" fill="#f6f8ff"/>
<text x="965.06" y="411.70" font-size="3.33" textLength="4.60" lengthAdjust="spacingAndGlyphs" fill="#a59d62">D4</text>
<circle cx="976.95" cy="415.60" r="2.90" fill="#5f90e4"/>
<circle cx="976.95" cy="415.60" r="1.51" fill="#f6f8ff"/>
<text x="974.65" y="411.70" font-size="3.33" textLength="4.60" lengthAdjust="spacingAndGlyphs" fill="#a59d62">D5</text>
<circle cx="986.54" cy="415.60" r="2.90" fill="#5f90e4"/>
<circle cx="986.54" cy="415.60" r="1.51" fill="#f6f8ff"/>
<text x="984.24" y="411.70" font-size="3.33" textLength="4.60" lengthAdjust="spacingAndGlyphs" fill="#a59d62">D6</text>
<circle cx="996.13" cy="415.60" r="2.90" fill="#5f90e4"/>
<circle cx="996.13" cy="415.60" r="1.51" fill="#f6f8ff"/>
<text x="993.83" y="411.70" font-size="3.33" textLength="4.60" lengthAdjust="spacingAndGlyphs" fill="#a59d62">D7</text>
<circle cx="1005.72" cy="415.60" r="2.90" fill="#5f90e4"/>
<circle cx="1005.72" cy="415.60" r="1.51" fill="#f6f8ff"/>
<text x="1003.42" y="411.70" font-size="3.33" textLength="4.60" lengthAdjust="spacingAndGlyphs" fill="#a59d62">D8</text>
<circle cx="1015.31" cy="415.60" r="2.90" fill="#5f90e4"/>
<circle cx="1015.31" cy="415.60" r="1.51" fill="#f6f8ff"/>
<text x="1013.01" y="411.70" font-size="3.33" textLength="4.60" lengthAdjust="spacingAndGlyphs" fill="#a59d62">D9</text>
<circle cx="1024.90" cy="415.60" r="2.90" fill="#5f90e4"/>
<circle cx="1024.90" cy="415.60" r="1.51" fill="#f6f8ff"/>
<text x="1022.60" y="411.70" font-size="3.33" textLength="4.60" lengthAdjust="spacingAndGlyphs" fill="#a59d62">D10</text>
<circle cx="1034.49" cy="415.60" r="2.90" fill="#5f90e4"/>
<circle cx="1034.49" cy="415.60" r="1.51" fill="#f6f8ff"/>
<text x="1032.19" y="411.70" font-size="3.33" textLength="4.60" lengthAdjust="spacingAndGlyphs" fill="#a59d62">D11</text>
<circle cx="1044.08" cy="415.60" r="2.90" fill="#5f90e4"/>
<circle cx="1044.08" cy="415.60" r="1.51" fill="#f6f8ff"/>
<text x="1041.78" y="411.70" font-size="3.33" textLength="4.60" lengthAdjust="spacingAndGlyphs" fill="#a59d62">D12</text>
<circle cx="1053.67" cy="415.60" r="2.90" fill="#5f90e4"/>
<circle cx="1053.67" cy="415.60" r="1.51" fill="#f6f8ff"/>
<text x="1051.37" y="411.70" font-size="3.33" textLength="4.60" lengthAdjust="spacingAndGlyphs" fill="#a59d62">D13</text>
<circle cx="1063.26" cy="415.60" r="2.90" fill="#5f90e4"/>
<circle cx="1063.26" cy="415.60" r="1.51" fill="#f6f8ff"/>
<text x="1060.96" y="411.70" font-size="3.33" textLength="4.60" lengthAdjust="spacingAndGlyphs" fill="#a59d62">D14</text>
<circle cx="1072.85" cy="415.60" r="2.90" fill="#5f90e4"/>
<circle cx="1072.85" cy="415.60" r="1.51" fill="#f6f8ff"/>
<text x="1070.55" y="411.70" font-size="3.33" textLength="4.60" lengthAdjust="spacingAndGlyphs" fill="#a59d62">D15</text>
<circle cx="1082.44" cy="415.60" r="2.90" fill="#5f90e4"/>
<circle cx="1082.44" cy="415.60" r="1.51" fill="#f6f8ff"/>
<text x="1080.14" y="411.70" font-size="3.33" textLength="4.60" lengthAdjust="spacingAndGlyphs" fill="#a59d62">D16</text>
<circle cx="1092.03" cy="415.60" r="2.90" fill="#5f90e4"/>
<circle cx="1092.03" cy="415.60" r="1.51" fill="#f6f8ff"/>
<text x="1089.73" y="411.70" font-size="3.33" textLength="4.60" lengthAdjust="spacingAndGlyphs" fill="#a59d62">D17</text>
<circle cx="1101.62" cy="415.60" r="2.90" fill="#5f90e4"/>
<circle cx="1101.62" cy="415.60" r="1.51" fill="#f6f8ff"/>
<text x="1099.32" y="411.70" font-size="3.33" textLength="4.60" lengthAdjust="spacingAndGlyphs" fill="#a59d62">D18</text>
<circle cx="1111.21" cy="415.60" r="2.90" fill="#5f90e4"/>
<circle cx="1111.21" cy="415.60" r="1.51" fill="#f6f8ff"/>
<text x="1108.91" y="411.70" font-size="3.33" textLength="4.60" lengthAdjust="spacingAndGlyphs" fill="#a59d62">D19</text>
<circle cx="1120.80" cy="415.60" r="2.90" fill="#5f90e4"/>
<circle cx="1120.80" cy="415.60" r="1.51" fill="#f6f8ff"/>
<text x="1118.50" y="411.70" font-size="3.33" textLength="4.60" lengthAdjust="spacingAndGlyphs" fill="#a59d62">D20</text>
<circle cx="1130.39" cy="415.60" r="2.90" fill="#5f90e4"/>
<circle cx="1130.39" cy="415.60" r="1.51" fill="#f6f8ff"/>
<text x="1128.09" y="411.70" font-size="3.33" textLength="4.60" lengthAdjust="spacingAndGlyphs" fill="#a59d62">D21</text>
<circle cx="1139.98" cy="415.60" r="2.90" fill="#5f90e4"/>
<circle cx="1139.98" cy="415.60" r="1.51" fill="#f6f8ff"/>
<text x="1137.68" y="411.70" font-size="3.33" textLength="4.60" lengthAdjust="spacingAndGlyphs" fill="#a59d62">D22</text>
<circle cx="1149.57" cy="415.60" r="2.90" fill="#5f90e4"/>
<circle cx="1149.57" cy="415.60" r="1.51" fill="#f6f8ff"/>
<text x="1147.27" y="411.70" font-size="3.33" textLength="4.60" lengthAdjust="spacingAndGlyphs" fill="#a59d62">D23</text>
<rect x="926.10" y="488.10" width="5.80" height="5.80" fill="#5f90e4"/>
<circle cx="929.00" cy="491.00" r="1.51" fill="#f6f8ff"/>
<text x="926.70" y="487.10" font-size="3.33" textLength="4.60" lengthAdjust="spacingAndGlyphs" fill="#a59d62">D0</text>
<circle cx="938.59" cy="491.00" r="2.90" fill="#5f90e4"/>
<circle cx="938.59" cy="491.00" r="1.51" fill="#f6f8ff"/>
<text x="936.29" y="487.10" font-size="3.33" textLength="4.60" lengthAdjust="spacingAndGlyphs" fill="#a59d62">D1</text>
<circle cx="948.18" cy="491.00" r="2.90" fill="#5f90e4"/>
<circle cx="948.18" cy="491.00" r="1.51" fill="#f6f8ff"/>
<text x="945.88" y="487.10" font-size="3.33" textLength="4.60" lengthAdjust="spacingAndGlyphs" fill="#a59d62">D2</text>
<circle cx="957.77" cy="491.00" r="2.90" fill="#5f90e4"/>
<circle cx="957.77" cy="491.00" r="1.51" fill="#f6f8ff"/>
<text x="955.47" y="487.10" font-size="3.33" textLength="4.60" lengthAdjust="spacingAndGlyphs" fill="#a59d62">D3</text>
<circle cx="967.36" cy="491.00" r="2.90" fill="#5f90e4"/>
<circle cx="967.36" cy="491.00" r="1.51" fill="#f6f8ff"/>
<text x="965.06" y="487.10" font-size="3.33" textLength="4.60" lengthAdjust="spacingAndGlyphs" fill="#a59d62">D4</text>
<circle cx="976.95" cy="491.00" r="2.90" fill="#5f90e4"/>
<circle cx="976.95" cy="491.00" r="1.51" fill="#f6f8ff"/>
<text x="974.65" y="487.10" font-size="3.33" textLength="4.60" lengthAdjust="spacingAndGlyphs" fill="#a59d62">D5</text>
<circle cx="986.54" cy="491.00" r="2.90" fill="#5f90e4"/>
<circle cx="986.54" cy="491.00" r="1.51" fill="#f6f8ff"/>
<text x="984.24" y="487.10" font-size="3.33" textLength="4.60" lengthAdjust="spacingAndGlyphs" fill="#a59d62">D6</text>
<circle cx="996.13" cy="491.00" r="2.90" fill="#5f90e4"/>
<circle cx="996.13" cy="491.00" r="1.51" fill="#f6f8ff"/>
<text x="993.83" y="487.10" font-size="3.33" textLength="4.60" lengthAdjust="spacingAndGlyphs" fill="#a59d62">D7</text>
<circle cx="1005.72" cy="491.00" r="2.90" fill="#5f90e4"/>
<circle cx="1005.72" cy="491.00" r="1.51" fill="#f6f8ff"/>
<text x="1003.42" y="487.10" font-size="3.33" textLength="4.60" lengthAdjust="spacingAndGlyphs" fill="#a59d62">D8</text>
<circle cx="1015.31" cy="491.00" r="2.90" fill="#5f90e4"/>
<circle cx="1015.31" cy="491.00" r="1.51" fill="#f6f8ff"/>
<text x="1013.01" y="487.10" font-size="3.33" textLength="4.60" lengthAdjust="spacingAndGlyphs" fill="#a59d62">D9</text>
<circle cx="1024.90" cy="491.00" r="2.90" fill="#5f90e4"/>
<circle cx="1024.90" cy="491.00" r="1.51" fill="#f6f8ff"/>
<text x="1022.60" y="487.10" font-size="3.33" textLength="4.60" lengthAdjust="spacingAndGlyphs" fill="#a59d62">D10</text>
<circle cx="1034.49" cy="491.00" r="2.90" fill="#5f90e4"/>
<circle cx="1034.49" cy="491.00" r="1.51" fill="#f6f8ff"/>
<text x="1032.19" y="487.10" font-size="3.33" textLength="4.60" lengthAdjust="spacingAndGlyphs" fill="#a59d62">D11</text>
<circle cx="1044.08" cy="491.00" r="2.90" fill="#5f90e4"/>
<circle cx="1044.08" cy="491.00" r="1.51" fill="#f6f8ff"/>
<text x="1041.78" y="487.10" font-size="3.33" textLength="4.60" lengthAdjust="spacingAndGlyphs" fill="#a59d62">D12</text>
<circle cx="1053.67" cy="491.00" r="2.90" fill="#5f90e4"/>
<circle cx="1053.67" cy="491.00" r="1.51" fill="#f6f8ff"/>
<text x="1051.37" y="487.10" font-size="3.33" textLength="4.60" lengthAdjust="spacingAndGlyphs" fill="#a59d62">D13</text>
<circle cx="1063.26" cy="491.00" r="2.90" fill="#5f90e4"/>
<circle cx="1063.26" cy="491.00" r="1.51" fill="#f6f8ff"/>
<text x="1060.96" y="487.10" font-size="3.33" textLength="4.60" lengthAdjust="spacingAndGlyphs" fill="#a59d62">D14</text>
<circle cx="1072.85" cy="491.00" r="2.90" fill="#5f90e4"/>
<circle cx="1072.85" cy="491.00" r="1.51" fill="#f6f8ff"/>
<text x="1070.55" y="487.10" font-size="3.33" textLength="4.60" lengthAdjust="spacingAndGlyphs" fill="#a59d62">D15</text>
<circle cx="1082.44" cy="491.00" r="2.90" fill="#5f90e4"/>
<circle cx="1082.44" cy="491.00" r="1.51" fill="#f6f8ff"/>
<text x="1080.14" y="487.10" font-size="3.33" textLength="4.60" lengthAdjust="spacingAndGlyphs" fill="#a59d62">D16</text>
<circle cx="1092.03" cy="491.00" r="2.90" fill="#5f90e4"/>
<circle cx="1092.03" cy="491.00" r="1.51" fill="#f6f8ff"/>
<text x="1089.73" y="487.10" font-size="3.33" textLength="4.60" lengthAdjust="spacingAndGlyphs" fill="#a59d62">D17</text>
<circle cx="1101.62" cy="491.00" r="2.90" fill="#5f90e4"/>
<circle cx="1101.62" cy="491.00" r="1.51" fill="#f6f8ff"/>
<text x="1099.32" y="487.10" font-size="3.33" textLength="4.60" lengthAdjust="spacingAndGlyphs" fill="#a59d62">D18</text>
<circle cx="1111.21" cy="491.00" r="2.90" fill="#5f90e4"/>
<circle cx="1111.21" cy="491.00" r="1.51" fill="#f6f8ff"/>
<text x="1108.91" y="487.10" font-size="3.33" textLength="4.60" lengthAdjust="spacingAndGlyphs" fill="#a59d62">D19</text>
<circle cx="1120.80" cy="491.00" r="2.90" fill="#5f90e4"/>
<circle cx="1120.80" cy="491.00" r="1.51" fill="#f6f8ff"/>
<text x="1118.50" y="487.10" font-size="3.33" textLength="4.60" lengthAdjust="spacingAndGlyphs" fill="#a59d62">D20</text>
<circle cx="1130.39" cy="491.00" r="2.90" fill="#5f90e4"/>
<circle cx="1130.39" cy="491.00" r="1.51" fill="#f6f8ff"/>
<text x="1128.09" y="487.10" font-size="3.33" textLength="4.60" lengthAdjust="spacingAndGlyphs" fill="#a59d62">D21</text>
<circle cx="1139.98" cy="491.00" r="2.90" fill="#5f90e4"/>
<circle cx="1139.98" cy="491.00" r="1.51" fill="#f6f8ff"/>
<text x="1137.68" y="487.10" font-size="3.33" textLength="4.60" lengthAdjust="spacingAndGlyphs" fill="#a59d62">D22</text>
<circle cx="1149.57" cy="491.00" r="2.90" fill="#5f90e4"/>
<circle cx="1149.57" cy="491.00" r="1.51" fill="#f6f8ff"/>
<text x="1147.27" y="487.10" font-size="3.33" textLength="4.60" lengthAdjust="spacingAndGlyphs" fill="#a59d62">D23</text>
<text x="1030.00" y="407.30" font-size="3.94" textLength="18.00" lengthAdjust="spacingAndGlyphs" fill="#a59d62">J_TEENSY_R</text>
<text x="1031.00" y="483.30" font-size="3.94" textLength="18.00" lengthAdjust="spacingAndGlyphs" fill="#a59d62">J_TEENSY_L</text>
<text x="1018.00" y="551.10" font-size="9.72" font-family="Liberation Sans" textLength="43.00" lengthAdjust="spacingAndGlyphs" fill="#d9d08f">TEENSY 4.1</text>
<rect x="1091.50" y="450.00" width="6.00" height="7.00" fill="none" stroke="#7a744c" stroke-width="0.6"/>
<rect x="1091.65" y="451.70" width="2.10" height="3.00" fill="#d63a3a" />
<rect x="1095.25" y="451.70" width="2.10" height="3.00" fill="#d63a3a" />
<text x="1091.50" y="449.20" font-size="3.64" textLength="6.00" lengthAdjust="spacingAndGlyphs" fill="#d9d08f">10k</text>
<rect x="1111.00" y="450.00" width="6.00" height="7.00" fill="none" stroke="#7a744c" stroke-width="0.6"/>
<rect x="1111.15" y="451.70" width="2.10" height="3.00" fill="#d63a3a" />
<rect x="1114.75" y="451.70" width="2.10" height="3.00" fill="#d63a3a" />
<text x="1111.00" y="449.20" font-size="3.64" textLength="6.00" lengthAdjust="spacingAndGlyphs" fill="#d9d08f">10k</text>
<rect x="1025.10" y="305.70" width="1.60" height="7.40" fill="#d63a3a" />
<rect x="1025.10" y="328.60" width="1.60" height="7.40" fill="#d63a3a" />
<rect x="1027.60" y="305.70" width="1.60" height="7.40" fill="#d63a3a" />
<rect x="1027.60" y="328.60" width="1.60" height="7.40" fill="#d63a3a" />
<rect x="1030.10" y="305.70" width="1.60" height="7.40" fill="#d63a3a" />
<rect x="1030.10" y="328.60" width="1.60" height="7.40" fill="#d63a3a" />
<rect x="1032.60" y="305.70" width="1.60" height="7.40" fill="#d63a3a" />
<rect x="1032.60" y="328.60" width="1.60" height="7.40" fill="#d63a3a" />
<rect x="1035.10" y="305.70" width="1.60" height="7.40" fill="#d63a3a" />
<rect x="1035.10" y="328.60" width="1.60" height="7.40" fill="#d63a3a" />
<rect x="1037.60" y="305.70" width="1.60" height="7.40" fill="#d63a3a" />
<rect x="1037.60" y="328.60" width="1.60" height="7.40" fill="#d63a3a" />
<rect x="1040.10" y="305.70" width="1.60" height="7.40" fill="#d63a3a" />
<rect x="1040.10" y="328.60" width="1.60" height="7.40" fill="#d63a3a" />
<rect x="1042.60" y="305.70" width="1.60" height="7.40" fill="#d63a3a" />
<rect x="1042.60" y="328.60" width="1.60" height="7.40" fill="#d63a3a" />
<rect x="1045.10" y="305.70" width="1.60" height="7.40" fill="#d63a3a" />
<rect x="1045.10" y="328.60" width="1.60" height="7.40" fill="#d63a3a" />
<rect x="1047.60" y="305.70" width="1.60" height="7.40" fill="#d63a3a" />
<rect x="1047.60" y="328.60" width="1.60" height="7.40" fill="#d63a3a" />
<rect x="1050.10" y="305.70" width="1.60" height="7.40" fill="#d63a3a" />
<rect x="1050.10" y="328.60" width="1.60" height="7.40" fill="#d63a3a" />
<rect x="1052.60" y="305.70" width="1.60" height="7.40" fill="#d63a3a" />
<rect x="1052.60" y="328.60" width="1.60" height="7.40" fill="#d63a3a" />
<text x="1049.40" y="358.25" font-size="9.31" font-family="Liberation Sans" textLength="41.20" lengthAdjust="spacingAndGlyphs" fill="#d9d08f">U_I2C_MUX</text>
<text x="1133.40" y="358.25" font-size="9.31" font-family="Liberation Sans" textLength="24.00" lengthAdjust="spacingAndGlyphs" fill="#d9d08f">U_BME</text>
<rect x="1073.90" y="317.50" width="7.00" height="7.00" fill="none" stroke="#7a744c" stroke-width="0.6"/>
<rect x="1074.55" y="319.20" width="2.10" height="3.00" fill="#d63a3a" />
<rect x="1078.15" y="319.20" width="2.10" height="3.00" fill="#d63a3a" />
<text x="1074.40" y="316.70" font-size="3.64" textLength="6.00" lengthAdjust="spacingAndGlyphs" fill="#d9d08f">10k</text>
<rect x="1141.40" y="317.50" width="7.00" height="7.00" fill="none" stroke="#7a744c" stroke-width="0.6"/>
<rect x="1142.05" y="319.20" width="2.10" height="3.00" fill="#d63a3a" />
<rect x="1145.65" y="319.20" width="2.10" height="3.00" fill="#d63a3a" />
<text x="1141.90" y="316.70" font-size="3.64" textLength="6.00" lengthAdjust="spacingAndGlyphs" fill="#d9d08f">10k</text>
<rect x="978.20" y="336.75" width="7.00" height="6.50" fill="none" stroke="#7a744c" stroke-width="0.6"/>
<rect x="978.85" y="338.20" width="2.10" height="3.00" fill="#d63a3a" />
<rect x="982.45" y="338.20" width="2.10" height="3.00" fill="#d63a3a" />
<text x="978.70" y="335.95" font-size="3.64" textLength="6.00" lengthAdjust="spacingAndGlyphs" fill="#d9d08f">10k</text>
<rect x="997.30" y="336.75" width="7.00" height="6.50" fill="none" stroke="#7a744c" stroke-width="0.6"/>
<rect x="997.95" y="338.20" width="2.10" height="3.00" fill="#d63a3a" />
<rect x="1001.55" y="338.20" width="2.10" height="3.00" fill="#d63a3a" />
<text x="997.80" y="335.95" font-size="3.64" textLength="6.00" lengthAdjust="spacingAndGlyphs" fill="#d9d08f">10k</text>
<rect x="1109.90" y="317.70" width="2.20" height="1.60" fill="#d63a3a" />
<rect x="1117.40" y="317.70" width="2.20" height="1.60" fill="#d63a3a" />
<rect x="1109.90" y="320.70" width="2.20" height="1.60" fill="#d63a3a" />
<rect x="1117.40" y="320.70" width="2.20" height="1.60" fill="#d63a3a" />
<rect x="1109.90" y="323.70" width="2.20" height="1.60" fill="#d63a3a" />
<rect x="1117.40" y="323.70" width="2.20" height="1.60" fill="#d63a3a" />
<rect x="785.70" y="545.10" width="5.80" height="5.80" fill="#5f90e4"/>
<circle cx="788.60" cy="548.00" r="1.51" fill="#f6f8ff"/>
<circle cx="798.60" cy="548.00" r="2.90" fill="#5f90e4"/>
<circle cx="798.60" cy="548.00" r="1.51" fill="#f6f8ff"/>
<rect x="785.70" y="582.70" width="5.80" height="5.80" fill="#5f90e4"/>
<circle cx="788.60" cy="585.60" r="1.51" fill="#f6f8ff"/>
<circle cx="798.60" cy="585.60" r="2.90" fill="#5f90e4"/>
<circle cx="798.60" cy="585.60" r="1.51" fill="#f6f8ff"/>
<rect x="785.70" y="639.10" width="5.80" height="5.80" fill="#5f90e4"/>
<circle cx="788.60" cy="642.00" r="1.51" fill="#f6f8ff"/>
<circle cx="798.60" cy="642.00" r="2.90" fill="#5f90e4"/>
<circle cx="798.60" cy="642.00" r="1.51" fill="#f6f8ff"/>
<text x="786.00" y="539.20" font-size="3.64" textLength="11.00" lengthAdjust="spacingAndGlyphs" fill="#d9d08f">J_3V3</text>
<text x="788.00" y="577.20" font-size="3.64" textLength="8.00" lengthAdjust="spacingAndGlyphs" fill="#d9d08f">J_5V</text>
<text x="788.00" y="633.20" font-size="3.64" textLength="11.00" lengthAdjust="spacingAndGlyphs" fill="#d9d08f">J_PWR</text>
<text x="745.50" y="562.35" font-size="9.31" font-family="Liberation Sans" textLength="21.50" lengthAdjust="spacingAndGlyphs" fill="#d9d08f">J_3V3</text>
<text x="748.00" y="600.35" font-size="9.31" font-family="Liberation Sans" textLength="17.00" lengthAdjust="spacingAndGlyphs" fill="#d9d08f">J_5V</text>
<text x="769.50" y="637.20" font-size="7.22" font-family="Liberation Sans" textLength="11.50" lengthAdjust="spacingAndGlyphs" fill="#d9d08f">GND</text>
<text x="745.00" y="656.95" font-size="9.31" font-family="Liberation Sans" textLength="23.00" lengthAdjust="spacingAndGlyphs" fill="#d9d08f">J_PWR</text>
<text x="768.00" y="663.80" font-size="7.22" font-family="Liberation Sans" textLength="15.00" lengthAdjust="spacingAndGlyphs" fill="#d9d08f">+12V</text>
<rect x="844.00" y="555.00" width="12.00" height="10.00" fill="none" stroke="#7a744c" stroke-width="0.6"/>
<rect x="845.00" y="556.00" width="4.00" height="6.00" fill="#d63a3a" />
<rect x="852.00" y="556.00" width="4.00" height="6.00" fill="#d63a3a" />
<text x="846.00" y="553.10" font-size="3.33" textLength="9.00" lengthAdjust="spacingAndGlyphs" fill="#a59d62">C_3V3</text>
<rect x="846.50" y="581.50" width="7.00" height="7.00" fill="none" stroke="#7a744c" stroke-width="0.6"/>
<rect x="847.15" y="583.20" width="2.10" height="3.00" fill="#d63a3a" />
<rect x="850.75" y="583.20" width="2.10" height="3.00" fill="#d63a3a" />
<text x="847.00" y="580.70" font-size="3.64" textLength="6.00" lengthAdjust="spacingAndGlyphs" fill="#d9d08f">10k</text>
<rect x="883.60" y="579.50" width="1.80" height="4.00" fill="#d63a3a" />
<rect x="887.10" y="579.50" width="1.80" height="4.00" fill="#d63a3a" />
<rect x="890.60" y="579.50" width="1.80" height="4.00" fill="#d63a3a" />
<rect x="883.60" y="589.50" width="1.80" height="4.00" fill="#d63a3a" />
<rect x="890.60" y="589.50" width="1.80" height="4.00" fill="#d63a3a" />
<rect x="922.00" y="582.00" width="7.00" height="7.00" fill="none" stroke="#7a744c" stroke-width="0.6"/>
<rect x="922.65" y="583.70" width="2.10" height="3.00" fill="#d63a3a" />
<rect x="926.25" y="583.70" width="2.10" height="3.00" fill="#d63a3a" />
<text x="922.50" y="581.20" font-size="3.64" textLength="6.00" lengthAdjust="spacingAndGlyphs" fill="#d9d08f">10k</text>
<rect x="941.00" y="582.00" width="7.00" height="7.00" fill="none" stroke="#7a744c" stroke-width="0.6"/>
<rect x="941.65" y="583.70" width="2.10" height="3.00" fill="#d63a3a" />
<rect x="945.25" y="583.70" width="2.10" height="3.00" fill="#d63a3a" />
<text x="941.50" y="581.20" font-size="3.64" textLength="6.00" lengthAdjust="spacingAndGlyphs" fill="#d9d08f">10k</text>
<text x="907.00" y="615.35" font-size="9.31" font-family="Liberation Sans" textLength="23.00" lengthAdjust="spacingAndGlyphs" fill="#d9d08f">U_LDO</text>
<rect x="878.00" y="636.00" width="20.00" height="12.00" fill="none" stroke="#7a744c" stroke-width="0.6"/>
<path d="M878,639.5 a2.5,2.5 0 0 1 0,5" fill="none" stroke="#a59d62" stroke-width="0.8"/>
<rect x="880.50" y="628.25" width="2.00" height="7.50" fill="#d63a3a" />
<rect x="880.50" y="648.25" width="2.00" height="7.50" fill="#d63a3a" />
<rect x="885.90" y="628.25" width="2.00" height="7.50" fill="#d63a3a" />
<rect x="885.90" y="648.25" width="2.00" height="7.50" fill="#d63a3a" />
<rect x="891.30" y="628.25" width="2.00" height="7.50" fill="#d63a3a" />
<rect x="891.30" y="648.25" width="2.00" height="7.50" fill="#d63a3a" />
<rect x="896.70" y="628.25" width="2.00" height="7.50" fill="#d63a3a" />
<rect x="896.70" y="648.25" width="2.00" height="7.50" fill="#d63a3a" />
<rect x="932.00" y="629.00" width="26.00" height="26.60" fill="none" stroke="#7a744c" stroke-width="0.6"/>
<rect x="930.00" y="637.25" width="8.00" height="9.50" fill="#d63a3a" />
<rect x="952.00" y="637.25" width="8.00" height="9.50" fill="#d63a3a" />
<rect x="824.00" y="638.00" width="21.00" height="9.00" fill="none" stroke="#7a744c" stroke-width="0.6"/>
<rect x="825.00" y="638.75" width="5.00" height="6.50" fill="#d63a3a" />
<rect x="833.00" y="638.75" width="5.00" height="6.50" fill="#d63a3a" />
<rect x="991.00" y="638.00" width="8.00" height="9.00" fill="none" stroke="#7a744c" stroke-width="0.6"/>
<rect x="992.50" y="638.75" width="5.00" height="6.50" fill="#d63a3a" />
<rect x="1004.00" y="638.00" width="8.00" height="9.00" fill="none" stroke="#7a744c" stroke-width="0.6"/>
<rect x="1005.50" y="638.75" width="5.00" height="6.50" fill="#d63a3a" />
<text x="904.00" y="671.35" font-size="9.31" font-family="Liberation Sans" textLength="29.00" lengthAdjust="spacingAndGlyphs" fill="#d9d08f">U_BUCK</text>
<rect x="1319.20" y="241.85" width="7.00" height="6.50" fill="none" stroke="#7a744c" stroke-width="0.6"/>
<rect x="1319.85" y="243.30" width="2.10" height="3.00" fill="#d63a3a" />
<rect x="1323.45" y="243.30" width="2.10" height="3.00" fill="#d63a3a" />
<text x="1319.70" y="241.05" font-size="3.64" textLength="6.00" lengthAdjust="spacingAndGlyphs" fill="#d9d08f">10k</text>
<rect x="1319.20" y="279.25" width="7.00" height="6.50" fill="none" stroke="#7a744c" stroke-width="0.6"/>
<rect x="1319.85" y="280.70" width="2.10" height="3.00" fill="#d63a3a" />
<rect x="1323.45" y="280.70" width="2.10" height="3.00" fill="#d63a3a" />
<text x="1319.70" y="278.45" font-size="3.64" textLength="6.00" lengthAdjust="spacingAndGlyphs" fill="#d9d08f">10k</text>
<rect x="1335.30" y="241.40" width="4.00" height="1.80" fill="#d63a3a" />
<rect x="1335.30" y="248.00" width="4.00" height="1.80" fill="#d63a3a" />
<rect x="1344.00" y="244.60" width="4.00" height="1.80" fill="#d63a3a" />
<text x="1334.00" y="239.20" font-size="3.64" textLength="10.00" lengthAdjust="spacingAndGlyphs" fill="#d9d08f">Q_FAN</text>
<rect x="1335.30" y="278.90" width="4.00" height="1.80" fill="#d63a3a" />
<rect x="1335.30" y="285.50" width="4.00" height="1.80" fill="#d63a3a" />
<rect x="1344.00" y="282.10" width="4.00" height="1.80" fill="#d63a3a" />
<text x="1334.00" y="276.70" font-size="3.64" textLength="10.00" lengthAdjust="spacingAndGlyphs" fill="#d9d08f">Q_FAN</text>
<rect x="1354.00" y="221.20" width="12.00" height="11.00" fill="none" stroke="#7a744c" stroke-width="0.6"/>
<rect x="1354.80" y="223.70" width="4.00" height="6.00" fill="#d63a3a" />
<rect x="1361.40" y="223.70" width="4.00" height="6.00" fill="#d63a3a" />
<text x="1355.00" y="220.40" font-size="3.64" textLength="10.00" lengthAdjust="spacingAndGlyphs" fill="#d9d08f">C</text>
<rect x="1354.00" y="258.90" width="12.00" height="11.00" fill="none" stroke="#7a744c" stroke-width="0.6"/>
<rect x="1354.80" y="261.40" width="4.00" height="6.00" fill="#d63a3a" />
<rect x="1361.40" y="261.40" width="4.00" height="6.00" fill="#d63a3a" />
<text x="1355.00" y="258.10" font-size="3.64" textLength="10.00" lengthAdjust="spacingAndGlyphs" fill="#d9d08f">C</text>
<circle cx="1375.60" cy="245.50" r="2.90" fill="#5f90e4"/>
<circle cx="1375.60" cy="245.50" r="1.51" fill="#f6f8ff"/>
<circle cx="1383.00" cy="245.50" r="2.90" fill="#5f90e4"/>
<circle cx="1383.00" cy="245.50" r="1.51" fill="#f6f8ff"/>
<text x="1374.00" y="235.60" font-size="3.33" textLength="10.00" lengthAdjust="spacingAndGlyphs" fill="#a59d62">+  -</text>
<circle cx="1375.60" cy="283.50" r="2.90" fill="#5f90e4"/>
<circle cx="1375.60" cy="283.50" r="1.51" fill="#f6f8ff"/>
<circle cx="1383.00" cy="283.50" r="2.90" fill="#5f90e4"/>
<circle cx="1383.00" cy="283.50" r="1.51" fill="#f6f8ff"/>
<text x="1374.00" y="273.60" font-size="3.33" textLength="10.00" lengthAdjust="spacingAndGlyphs" fill="#a59d62">+  -</text>
<rect x="1375.00" y="318.35" width="7.00" height="6.50" fill="none" stroke="#7a744c" stroke-width="0.6"/>
<rect x="1375.65" y="319.80" width="2.10" height="3.00" fill="#d63a3a" />
<rect x="1379.25" y="319.80" width="2.10" height="3.00" fill="#d63a3a" />
<text x="1375.50" y="317.55" font-size="3.64" textLength="6.00" lengthAdjust="spacingAndGlyphs" fill="#d9d08f">10k</text>
<rect x="1318.30" y="374.15" width="7.00" height="6.50" fill="none" stroke="#7a744c" stroke-width="0.6"/>
<rect x="1318.95" y="375.60" width="2.10" height="3.00" fill="#d63a3a" />
<rect x="1322.55" y="375.60" width="2.10" height="3.00" fill="#d63a3a" />
<text x="1318.80" y="373.35" font-size="3.64" textLength="6.00" lengthAdjust="spacingAndGlyphs" fill="#d9d08f">10k</text>
<rect x="1372.00" y="354.00" width="12.00" height="11.00" fill="none" stroke="#7a744c" stroke-width="0.6"/>
<rect x="1372.50" y="355.90" width="4.00" height="7.00" fill="#d63a3a" />
<rect x="1379.50" y="355.90" width="4.00" height="7.00" fill="#d63a3a" />
<text x="1339.70" y="373.55" font-size="9.31" font-family="Liberation Sans" textLength="34.10" lengthAdjust="spacingAndGlyphs" fill="#d9d08f">U_PUMP4</text>
<rect x="1296.70" y="391.35" width="6.00" height="1.50" fill="#d63a3a" />
<rect x="1305.00" y="391.35" width="6.00" height="1.50" fill="#d63a3a" />
<rect x="1296.70" y="393.65" width="6.00" height="1.50" fill="#d63a3a" />
<rect x="1305.00" y="393.65" width="6.00" height="1.50" fill="#d63a3a" />
<rect x="1296.70" y="395.95" width="6.00" height="1.50" fill="#d63a3a" />
<rect x="1305.00" y="395.95" width="6.00" height="1.50" fill="#d63a3a" />
<rect x="1296.70" y="398.25" width="6.00" height="1.50" fill="#d63a3a" />
<rect x="1305.00" y="398.25" width="6.00" height="1.50" fill="#d63a3a" />
<rect x="1296.70" y="400.55" width="6.00" height="1.50" fill="#d63a3a" />
<rect x="1305.00" y="400.55" width="6.00" height="1.50" fill="#d63a3a" />
<rect x="1332.90" y="391.70" width="16.00" height="10.00" fill="none" stroke="#7a744c" stroke-width="0.6"/>
<rect x="1333.35" y="392.95" width="4.50" height="7.50" fill="#d63a3a" />
<rect x="1344.45" y="392.95" width="4.50" height="7.50" fill="#d63a3a" />
<text x="1336.00" y="390.90" font-size="3.64" textLength="9.00" lengthAdjust="spacingAndGlyphs" fill="#d9d08f">C_PUMP</text>
<rect x="1296.70" y="447.95" width="6.00" height="1.50" fill="#d63a3a" />
<rect x="1305.00" y="447.95" width="6.00" height="1.50" fill="#d63a3a" />
<rect x="1296.70" y="450.25" width="6.00" height="1.50" fill="#d63a3a" />
<rect x="1305.00" y="450.25" width="6.00" height="1.50" fill="#d63a3a" />
<rect x="1296.70" y="452.55" width="6.00" height="1.50" fill="#d63a3a" />
<rect x="1305.00" y="452.55" width="6.00" height="1.50" fill="#d63a3a" />
<rect x="1296.70" y="454.85" width="6.00" height="1.50" fill="#d63a3a" />
<rect x="1305.00" y="454.85" width="6.00" height="1.50" fill="#d63a3a" />
<rect x="1296.70" y="457.15" width="6.00" height="1.50" fill="#d63a3a" />
<rect x="1305.00" y="457.15" width="6.00" height="1.50" fill="#d63a3a" />
<rect x="1332.90" y="448.30" width="16.00" height="10.00" fill="none" stroke="#7a744c" stroke-width="0.6"/>
<rect x="1333.35" y="449.55" width="4.50" height="7.50" fill="#d63a3a" />
<rect x="1344.45" y="449.55" width="4.50" height="7.50" fill="#d63a3a" />
<text x="1336.00" y="447.50" font-size="3.64" textLength="9.00" lengthAdjust="spacingAndGlyphs" fill="#d9d08f">C_PUMP</text>
<rect x="1296.70" y="504.65" width="6.00" height="1.50" fill="#d63a3a" />
<rect x="1305.00" y="504.65" width="6.00" height="1.50" fill="#d63a3a" />
<rect x="1296.70" y="506.95" width="6.00" height="1.50" fill="#d63a3a" />
<rect x="1305.00" y="506.95" width="6.00" height="1.50" fill="#d63a3a" />
<rect x="1296.70" y="509.25" width="6.00" height="1.50" fill="#d63a3a" />
<rect x="1305.00" y="509.25" width="6.00" height="1.50" fill="#d63a3a" />
<rect x="1296.70" y="511.55" width="6.00" height="1.50" fill="#d63a3a" />
<rect x="1305.00" y="511.55" width="6.00" height="1.50" fill="#d63a3a" />
<rect x="1296.70" y="513.85" width="6.00" height="1.50" fill="#d63a3a" />
<rect x="1305.00" y="513.85" width="6.00" height="1.50" fill="#d63a3a" />
<rect x="1332.90" y="505.00" width="16.00" height="10.00" fill="none" stroke="#7a744c" stroke-width="0.6"/>
<rect x="1333.35" y="506.25" width="4.50" height="7.50" fill="#d63a3a" />
<rect x="1344.45" y="506.25" width="4.50" height="7.50" fill="#d63a3a" />
<text x="1336.00" y="504.20" font-size="3.64" textLength="9.00" lengthAdjust="spacingAndGlyphs" fill="#d9d08f">C_PUMP</text>
<rect x="1296.70" y="561.35" width="6.00" height="1.50" fill="#d63a3a" />
<rect x="1305.00" y="561.35" width="6.00" height="1.50" fill="#d63a3a" />
<rect x="1296.70" y="563.65" width="6.00" height="1.50" fill="#d63a3a" />
<rect x="1305.00" y="563.65" width="6.00" height="1.50" fill="#d63a3a" />
<rect x="1296.70" y="565.95" width="6.00" height="1.50" fill="#d63a3a" />
<rect x="1305.00" y="565.95" width="6.00" height="1.50" fill="#d63a3a" />
<rect x="1296.70" y="568.25" width="6.00" height="1.50" fill="#d63a3a" />
<rect x="1305.00" y="568.25" width="6.00" height="1.50" fill="#d63a3a" />
<rect x="1296.70" y="570.55" width="6.00" height="1.50" fill="#d63a3a" />
<rect x="1305.00" y="570.55" width="6.00" height="1.50" fill="#d63a3a" />
<rect x="1332.90" y="561.70" width="16.00" height="10.00" fill="none" stroke="#7a744c" stroke-width="0.6"/>
<rect x="1333.35" y="562.95" width="4.50" height="7.50" fill="#d63a3a" />
<rect x="1344.45" y="562.95" width="4.50" height="7.50" fill="#d63a3a" />
<text x="1336.00" y="560.90" font-size="3.64" textLength="9.00" lengthAdjust="spacingAndGlyphs" fill="#d9d08f">C_PUMP</text>
<rect x="1318.30" y="430.75" width="7.00" height="6.50" fill="none" stroke="#7a744c" stroke-width="0.6"/>
<rect x="1318.95" y="432.20" width="2.10" height="3.00" fill="#d63a3a" />
<rect x="1322.55" y="432.20" width="2.10" height="3.00" fill="#d63a3a" />
<text x="1318.80" y="429.95" font-size="3.64" textLength="6.00" lengthAdjust="spacingAndGlyphs" fill="#d9d08f">10k</text>
<rect x="1318.50" y="487.75" width="7.00" height="6.50" fill="none" stroke="#7a744c" stroke-width="0.6"/>
<rect x="1319.15" y="489.20" width="2.10" height="3.00" fill="#d63a3a" />
<rect x="1322.75" y="489.20" width="2.10" height="3.00" fill="#d63a3a" />
<text x="1319.00" y="486.95" font-size="3.64" textLength="6.00" lengthAdjust="spacingAndGlyphs" fill="#d9d08f">10k</text>
<rect x="1318.50" y="544.75" width="7.00" height="6.50" fill="none" stroke="#7a744c" stroke-width="0.6"/>
<rect x="1319.15" y="546.20" width="2.10" height="3.00" fill="#d63a3a" />
<rect x="1322.75" y="546.20" width="2.10" height="3.00" fill="#d63a3a" />
<text x="1319.00" y="543.95" font-size="3.64" textLength="6.00" lengthAdjust="spacingAndGlyphs" fill="#d9d08f">10k</text>
<rect x="1374.50" y="390.75" width="7.00" height="6.50" fill="none" stroke="#7a744c" stroke-width="0.6"/>
<rect x="1375.15" y="392.20" width="2.10" height="3.00" fill="#d63a3a" />
<rect x="1378.75" y="392.20" width="2.10" height="3.00" fill="#d63a3a" />
<text x="1375.00" y="389.95" font-size="3.64" textLength="6.00" lengthAdjust="spacingAndGlyphs" fill="#d9d08f">10k</text>
<rect x="1374.50" y="468.75" width="7.00" height="6.50" fill="none" stroke="#7a744c" stroke-width="0.6"/>
<rect x="1375.15" y="470.20" width="2.10" height="3.00" fill="#d63a3a" />
<rect x="1378.75" y="470.20" width="2.10" height="3.00" fill="#d63a3a" />
<text x="1375.00" y="467.95" font-size="3.64" textLength="6.00" lengthAdjust="spacingAndGlyphs" fill="#d9d08f">10k</text>
<rect x="1374.50" y="544.75" width="7.00" height="6.50" fill="none" stroke="#7a744c" stroke-width="0.6"/>
<rect x="1375.15" y="546.20" width="2.10" height="3.00" fill="#d63a3a" />
<rect x="1378.75" y="546.20" width="2.10" height="3.00" fill="#d63a3a" />
<text x="1375.00" y="543.95" font-size="3.64" textLength="6.00" lengthAdjust="spacingAndGlyphs" fill="#d9d08f">10k</text>
<rect x="1372.00" y="429.00" width="14.00" height="10.00" fill="none" stroke="#7a744c" stroke-width="0.6"/>
<rect x="1372.50" y="430.50" width="4.00" height="7.00" fill="#d63a3a" />
<rect x="1379.50" y="430.50" width="4.00" height="7.00" fill="#d63a3a" />
<text x="1374.00" y="428.20" font-size="3.64" textLength="10.00" lengthAdjust="spacingAndGlyphs" fill="#d9d08f">C_BUL</text>
<rect x="1372.00" y="505.00" width="14.00" height="10.00" fill="none" stroke="#7a744c" stroke-width="0.6"/>
<rect x="1372.50" y="506.50" width="4.00" height="7.00" fill="#d63a3a" />
<rect x="1379.50" y="506.50" width="4.00" height="7.00" fill="#d63a3a" />
<text x="1374.00" y="504.20" font-size="3.64" textLength="10.00" lengthAdjust="spacingAndGlyphs" fill="#d9d08f">C_BUL</text>
<rect x="1372.00" y="580.00" width="14.00" height="10.00" fill="none" stroke="#7a744c" stroke-width="0.6"/>
<rect x="1372.50" y="581.50" width="4.00" height="7.00" fill="#d63a3a" />
<rect x="1379.50" y="581.50" width="4.00" height="7.00" fill="#d63a3a" />
<text x="1374.00" y="579.20" font-size="3.64" textLength="10.00" lengthAdjust="spacingAndGlyphs" fill="#d9d08f">C_BUL</text>
<text x="1253.00" y="430.35" font-size="9.31" font-family="Liberation Sans" textLength="26.00" lengthAdjust="spacingAndGlyphs" fill="#d9d08f">U_INA4</text>
<text x="1253.00" y="486.95" font-size="9.31" font-family="Liberation Sans" textLength="26.00" lengthAdjust="spacingAndGlyphs" fill="#d9d08f">U_INA3</text>
<text x="1253.00" y="543.35" font-size="9.31" font-family="Liberation Sans" textLength="26.00" lengthAdjust="spacingAndGlyphs" fill="#d9d08f">U_INA2</text>
<text x="1253.00" y="600.35" font-size="9.31" font-family="Liberation Sans" textLength="26.00" lengthAdjust="spacingAndGlyphs" fill="#d9d08f">U_INA1</text>
<text x="1355.00" y="449.35" font-size="9.31" font-family="Liberation Sans" textLength="29.00" lengthAdjust="spacingAndGlyphs" fill="#d9d08f">U_PUMP3</text>
<text x="1340.00" y="524.85" font-size="9.31" font-family="Liberation Sans" textLength="34.00" lengthAdjust="spacingAndGlyphs" fill="#d9d08f">U_PUMP2</text>
<text x="1340.00" y="600.35" font-size="9.31" font-family="Liberation Sans" textLength="34.00" lengthAdjust="spacingAndGlyphs" fill="#d9d08f">U_PUMP1</text>
<rect x="1148.40" y="600.85" width="7.00" height="6.50" fill="none" stroke="#7a744c" stroke-width="0.6"/>
<rect x="1149.05" y="602.30" width="2.10" height="3.00" fill="#d63a3a" />
<rect x="1152.65" y="602.30" width="2.10" height="3.00" fill="#d63a3a" />
<text x="1148.90" y="600.05" font-size="3.64" textLength="6.00" lengthAdjust="spacingAndGlyphs" fill="#d9d08f">10k</text>
<rect x="1148.40" y="620.35" width="7.00" height="6.50" fill="none" stroke="#7a744c" stroke-width="0.6"/>
<rect x="1149.05" y="621.80" width="2.10" height="3.00" fill="#d63a3a" />
<rect x="1152.65" y="621.80" width="2.10" height="3.00" fill="#d63a3a" />
<text x="1148.90" y="619.55" font-size="3.64" textLength="6.00" lengthAdjust="spacingAndGlyphs" fill="#d9d08f">10k</text>
<rect x="1174.45" y="609.30" width="1.50" height="7.00" fill="#d63a3a" />
<rect x="1174.45" y="631.00" width="1.50" height="7.00" fill="#d63a3a" />
<rect x="1176.80" y="609.30" width="1.50" height="7.00" fill="#d63a3a" />
<rect x="1176.80" y="631.00" width="1.50" height="7.00" fill="#d63a3a" />
<rect x="1179.15" y="609.30" width="1.50" height="7.00" fill="#d63a3a" />
<rect x="1179.15" y="631.00" width="1.50" height="7.00" fill="#d63a3a" />
<rect x="1181.50" y="609.30" width="1.50" height="7.00" fill="#d63a3a" />
<rect x="1181.50" y="631.00" width="1.50" height="7.00" fill="#d63a3a" />
<rect x="1183.85" y="609.30" width="1.50" height="7.00" fill="#d63a3a" />
<rect x="1183.85" y="631.00" width="1.50" height="7.00" fill="#d63a3a" />
<rect x="1186.20" y="609.30" width="1.50" height="7.00" fill="#d63a3a" />
<rect x="1186.20" y="631.00" width="1.50" height="7.00" fill="#d63a3a" />
<rect x="1188.55" y="609.30" width="1.50" height="7.00" fill="#d63a3a" />
<rect x="1188.55" y="631.00" width="1.50" height="7.00" fill="#d63a3a" />
<rect x="1190.90" y="609.30" width="1.50" height="7.00" fill="#d63a3a" />
<rect x="1190.90" y="631.00" width="1.50" height="7.00" fill="#d63a3a" />
<rect x="1193.25" y="609.30" width="1.50" height="7.00" fill="#d63a3a" />
<rect x="1193.25" y="631.00" width="1.50" height="7.00" fill="#d63a3a" />
<rect x="1195.60" y="609.30" width="1.50" height="7.00" fill="#d63a3a" />
<rect x="1195.60" y="631.00" width="1.50" height="7.00" fill="#d63a3a" />
<rect x="1197.95" y="609.30" width="1.50" height="7.00" fill="#d63a3a" />
<rect x="1197.95" y="631.00" width="1.50" height="7.00" fill="#d63a3a" />
<rect x="1200.30" y="609.30" width="1.50" height="7.00" fill="#d63a3a" />
<rect x="1200.30" y="631.00" width="1.50" height="7.00" fill="#d63a3a" />
<rect x="1202.65" y="609.30" width="1.50" height="7.00" fill="#d63a3a" />
<rect x="1202.65" y="631.00" width="1.50" height="7.00" fill="#d63a3a" />
<rect x="1205.00" y="609.30" width="1.50" height="7.00" fill="#d63a3a" />
<rect x="1205.00" y="631.00" width="1.50" height="7.00" fill="#d63a3a" />
<text x="1212.00" y="664.35" font-size="9.31" font-family="Liberation Sans" textLength="17.00" lengthAdjust="spacingAndGlyphs" fill="#d9d08f">U_TC</text>
<rect x="1270.65" y="656.25" width="9.50" height="9.50" fill="#d63a3a" />
<rect x="1289.95" y="656.25" width="9.50" height="9.50" fill="#d63a3a" />
<rect x="1327.25" y="656.25" width="9.50" height="9.50" fill="#d63a3a" />
<rect x="1346.65" y="656.25" width="9.50" height="9.50" fill="#d63a3a" />
<text x="1251.00" y="645.85" font-size="9.31" font-family="Liberation Sans" textLength="15.00" lengthAdjust="spacingAndGlyphs" fill="#d9d08f">J_TC1</text>
<text x="1307.00" y="645.85" font-size="9.31" font-family="Liberation Sans" textLength="15.00" lengthAdjust="spacingAndGlyphs" fill="#d9d08f">J_TC2</text>
<text x="1364.00" y="645.85" font-size="9.31" font-family="Liberation Sans" textLength="16.00" lengthAdjust="spacingAndGlyphs" fill="#d9d08f">J_TC3</text>
<rect x="1081.95" y="694.05" width="9.50" height="9.50" fill="#d63a3a" />
<rect x="1100.85" y="694.05" width="9.50" height="9.50" fill="#d63a3a" />
<rect x="1195.25" y="694.05" width="9.50" height="9.50" fill="#d63a3a" />
<rect x="1214.25" y="694.05" width="9.50" height="9.50" fill="#d63a3a" />
<rect x="1308.55" y="694.05" width="9.50" height="9.50" fill="#d63a3a" />
<rect x="1327.65" y="694.05" width="9.50" height="9.50" fill="#d63a3a" />
<rect x="1035.40" y="695.65" width="7.00" height="6.50" fill="none" stroke="#7a744c" stroke-width="0.6"/>
<rect x="1036.05" y="697.10" width="2.10" height="3.00" fill="#d63a3a" />
<rect x="1039.65" y="697.10" width="2.10" height="3.00" fill="#d63a3a" />
<text x="1035.90" y="694.85" font-size="3.64" textLength="6.00" lengthAdjust="spacingAndGlyphs" fill="#d9d08f">10k</text>
<rect x="1051.30" y="694.70" width="4.00" height="1.80" fill="#d63a3a" />
<rect x="1051.30" y="701.30" width="4.00" height="1.80" fill="#d63a3a" />
<rect x="1060.20" y="698.00" width="4.00" height="1.80" fill="#d63a3a" />
<text x="1050.00" y="692.20" font-size="3.64" textLength="10.00" lengthAdjust="spacingAndGlyphs" fill="#d9d08f">Q_HTR</text>
<rect x="1148.90" y="695.65" width="7.00" height="6.50" fill="none" stroke="#7a744c" stroke-width="0.6"/>
<rect x="1149.55" y="697.10" width="2.10" height="3.00" fill="#d63a3a" />
<rect x="1153.15" y="697.10" width="2.10" height="3.00" fill="#d63a3a" />
<text x="1149.40" y="694.85" font-size="3.64" textLength="6.00" lengthAdjust="spacingAndGlyphs" fill="#d9d08f">10k</text>
<rect x="1164.80" y="694.70" width="4.00" height="1.80" fill="#d63a3a" />
<rect x="1164.80" y="701.30" width="4.00" height="1.80" fill="#d63a3a" />
<rect x="1173.70" y="698.00" width="4.00" height="1.80" fill="#d63a3a" />
<text x="1163.50" y="692.20" font-size="3.64" textLength="10.00" lengthAdjust="spacingAndGlyphs" fill="#d9d08f">Q_HTR</text>
<rect x="1262.40" y="695.65" width="7.00" height="6.50" fill="none" stroke="#7a744c" stroke-width="0.6"/>
<rect x="1263.05" y="697.10" width="2.10" height="3.00" fill="#d63a3a" />
<rect x="1266.65" y="697.10" width="2.10" height="3.00" fill="#d63a3a" />
<text x="1262.90" y="694.85" font-size="3.64" textLength="6.00" lengthAdjust="spacingAndGlyphs" fill="#d9d08f">10k</text>
<rect x="1278.30" y="694.70" width="4.00" height="1.80" fill="#d63a3a" />
<rect x="1278.30" y="701.30" width="4.00" height="1.80" fill="#d63a3a" />
<rect x="1287.20" y="698.00" width="4.00" height="1.80" fill="#d63a3a" />
<text x="1277.00" y="692.20" font-size="3.64" textLength="10.00" lengthAdjust="spacingAndGlyphs" fill="#d9d08f">Q_HTR</text>
<rect x="1375.30" y="695.55" width="7.00" height="6.50" fill="none" stroke="#7a744c" stroke-width="0.6"/>
<rect x="1375.95" y="697.00" width="2.10" height="3.00" fill="#d63a3a" />
<rect x="1379.55" y="697.00" width="2.10" height="3.00" fill="#d63a3a" />
<text x="1375.80" y="694.75" font-size="3.64" textLength="6.00" lengthAdjust="spacingAndGlyphs" fill="#d9d08f">10k</text>
<rect x="1067.80" y="675.60" width="17.80" height="10.00" fill="none" stroke="#7a744c" stroke-width="0.6"/>
<rect x="1070.20" y="677.15" width="4.00" height="6.50" fill="#d63a3a" />
<rect x="1080.70" y="677.15" width="4.00" height="6.50" fill="#d63a3a" />
<text x="1060.00" y="683.15" font-size="7.64" font-family="Liberation Sans" textLength="20.00" lengthAdjust="spacingAndGlyphs" fill="#d9d08f">J_HTR4</text>
<text x="1075.00" y="674.20" font-size="3.64" textLength="7.00" lengthAdjust="spacingAndGlyphs" fill="#d9d08f">10k</text>
<rect x="1181.30" y="675.60" width="17.80" height="10.00" fill="none" stroke="#7a744c" stroke-width="0.6"/>
<rect x="1183.70" y="677.15" width="4.00" height="6.50" fill="#d63a3a" />
<rect x="1194.20" y="677.15" width="4.00" height="6.50" fill="#d63a3a" />
<text x="1173.50" y="683.15" font-size="7.64" font-family="Liberation Sans" textLength="20.00" lengthAdjust="spacingAndGlyphs" fill="#d9d08f">J_HTR1</text>
<text x="1188.50" y="674.20" font-size="3.64" textLength="7.00" lengthAdjust="spacingAndGlyphs" fill="#d9d08f">10k</text>
<rect x="1294.80" y="675.60" width="17.80" height="10.00" fill="none" stroke="#7a744c" stroke-width="0.6"/>
<rect x="1297.20" y="677.15" width="4.00" height="6.50" fill="#d63a3a" />
<rect x="1307.70" y="677.15" width="4.00" height="6.50" fill="#d63a3a" />
<text x="1287.00" y="683.15" font-size="7.64" font-family="Liberation Sans" textLength="20.00" lengthAdjust="spacingAndGlyphs" fill="#d9d08f">J_HTR2</text>
<text x="1302.00" y="674.20" font-size="3.64" textLength="7.00" lengthAdjust="spacingAndGlyphs" fill="#d9d08f">10k</text>
<text x="1104.40" y="701.65" font-size="7.64" font-family="Liberation Sans" textLength="21.20" lengthAdjust="spacingAndGlyphs" fill="#d9d08f">Rev 1.0</text>
<text x="1076.70" y="722.25" font-size="12.36" font-family="Liberation Sans" textLength="76.20" lengthAdjust="spacingAndGlyphs" fill="#d9d08f">AUTOLAB v2.0</text></svg></div>
  <div class="pipe">
    <div class="plbl">PIPELINE</div>
  </div>
<div class="chip" style="left:15px;top:771px;width:95px"><b>spec</b><i style="background:#10b981"></i><s>0.0s</s></div>
<div class="chip" style="left:113px;top:771px;width:114px"><b>generate</b><i style="background:#10b981"></i><s>0.0s</s></div>
<div class="chip" style="left:231px;top:771px;width:100px"><b>export</b><i style="background:#10b981"></i><s>9.1s</s></div>
<div class="chip" style="left:335px;top:771px;width:102px"><b>route</b><i style="background:#10b981"></i><s>22.4s</s></div>
<div class="chip" style="left:441px;top:771px;width:107px"><b>validate</b><i style="background:#94a3b8"></i><s>1.8s</s></div>
<div class="chip" style="left:552px;top:771px;width:101px"><b>assets</b><i style="background:#94a3b8"></i><s>0.7s</s></div>
<div class="chip" style="left:15px;top:802px;width:91px"><b>cost</b><i style="background:#94a3b8"></i><s>0.2s</s></div>
<div class="sc">? Shortcuts</div>
</div>
</body></html>
